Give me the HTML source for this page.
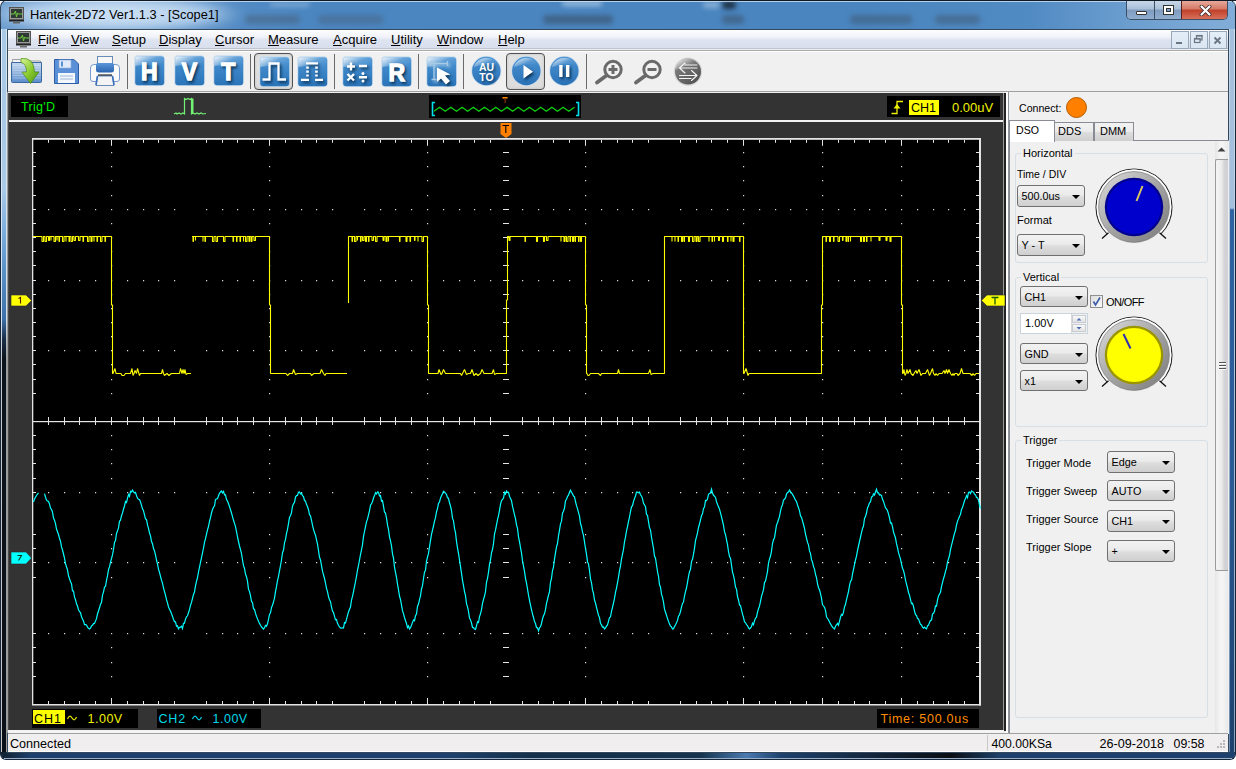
<!DOCTYPE html><html><head><meta charset="utf-8"><style>
*{margin:0;padding:0;box-sizing:border-box}
html,body{width:1236px;height:769px;overflow:hidden;background:#fff;font-family:"Liberation Sans",sans-serif;}
.a{position:absolute}
.t{position:absolute;white-space:nowrap;line-height:1}
.combo{position:absolute;border:1px solid #707070;border-radius:3px;background:linear-gradient(#f2f2f2,#ebebeb 45%,#dddddd 55%,#cfcfcf);font-size:11px;color:#000}
.combo span{position:absolute;left:3.5px;top:5px;line-height:1;font-size:10.8px}
.combo i{position:absolute;right:4px;top:8.6px;width:0;height:0;border-left:4px solid transparent;border-right:4px solid transparent;border-top:4px solid #000}
.gb{position:absolute;border:1px solid #d5dfe5;border-radius:3px}
.gbl{position:absolute;background:#f0f0f0;padding:0 2px;font-size:11px;line-height:1;color:#000}
.menu{position:absolute;top:33.4px;font-size:13px;line-height:1;color:#000;white-space:nowrap}
.menu u{text-decoration:underline;text-underline-offset:0.6px;text-decoration-thickness:1px}
.sep{position:absolute;top:54px;width:1px;height:35px;background:#6a6a6a}
</style></head><body>
<div class="a" style="left:0;top:0;width:1236px;height:760px;background:#16263a;border-radius:7px 7px 6px 6px"></div><div class="a" style="left:1px;top:1px;width:1234px;height:758px;background:linear-gradient(90deg,#6a9bcd 0,#4b86c1 25%,#4a85bf 70%,#5a92c8 100%);border-radius:6px 6px 5px 5px;overflow:hidden"></div><div class="a" style="left:1px;top:29px;width:6px;height:724px;background:linear-gradient(#a9c9e7 0,#a9c9e7 160px,#7fb0de 200px,#5a92c8 240px,#3d70a8 290px,#1a2f48 310px,#0b131c 330px,#0a1018 724px)"></div><div class="a" style="left:1px;top:29px;width:1px;height:724px;background:linear-gradient(#e2eef8 0,#d8e6f2 290px,#c8c8c8 330px,#c8c8c8 724px)"></div><div class="a" style="left:6px;top:29px;width:1px;height:724px;background:linear-gradient(#d8e6f0 0,#d0e0ee 290px,#a0a0a0 330px,#a0a0a0 724px)"></div><div class="a" style="left:1229px;top:29px;width:6px;height:724px;background:linear-gradient(#a4c0dc 0,#a4c0dc 179px,#2f62a0 181px,#2a5a94 450px,#1d416c 724px)"></div><div class="a" style="left:1229px;top:29px;width:1px;height:724px;background:linear-gradient(#c8daea,#6a8cb0)"></div><div class="a" style="left:1234px;top:29px;width:1px;height:724px;background:linear-gradient(#d0e0ee,#8aa4c0)"></div><div class="a" style="left:1px;top:752px;width:1234px;height:7px;border-radius:0 0 5px 5px;background:linear-gradient(90deg,#10202e 0,#1d416c 30px,#1d416c 450px,#14304a 530px,#16344e 700px,#4a7ab0 745px,#1d416c 780px,#0a0e12 950px,#1d416c 1000px,#1d416c 1234px)"></div><div class="a" style="left:4px;top:758px;width:1228px;height:1px;background:#9ab0c8"></div><div class="a" style="left:245px;top:15px;width:55px;height:9px;background:rgba(70,90,110,.45);filter:blur(2.5px);border-radius:4px;"></div><div class="a" style="left:318px;top:15px;width:65px;height:9px;background:rgba(70,90,110,.4);filter:blur(2.5px);border-radius:4px;"></div><div class="a" style="left:543px;top:15px;width:70px;height:9px;background:rgba(55,75,95,.55);filter:blur(2.5px);border-radius:4px;"></div><div class="a" style="left:722px;top:1px;width:14px;height:8px;background:rgba(20,30,40,.8);filter:blur(2.5px);border-radius:4px;"></div><div class="a" style="left:703px;top:2px;width:17px;height:6px;background:rgba(200,220,240,.5);filter:blur(2.5px);border-radius:4px;"></div><div class="a" style="left:722px;top:15px;width:22px;height:9px;background:rgba(55,75,95,.5);filter:blur(2.5px);border-radius:4px;"></div><div class="a" style="left:850px;top:15px;width:62px;height:9px;background:rgba(60,80,100,.45);filter:blur(2.5px);border-radius:4px;"></div><div class="a" style="left:935px;top:15px;width:45px;height:9px;background:rgba(60,80,100,.45);filter:blur(2.5px);border-radius:4px;"></div><div class="a" style="left:562px;top:1px;width:40px;height:5px;background:rgba(220,235,250,.55);filter:blur(2.5px);border-radius:4px;"></div><div class="a" style="left:270px;top:2px;width:40px;height:5px;background:rgba(200,225,245,.35);filter:blur(2.5px);border-radius:4px;"></div><div class="a" style="left:1030px;top:2px;width:205px;height:27px;background:linear-gradient(90deg,rgba(160,195,230,0),rgba(160,195,230,.3) 50%,rgba(170,200,232,.5));"></div><div class="a" style="left:-10px;top:-6px;width:260px;height:40px;filter:blur(6px);background:radial-gradient(ellipse 130px 20px at 125px 20px,rgba(215,232,248,.95) 0,rgba(200,222,244,.85) 70%,rgba(180,210,240,0) 100%)"></div><div class="a" style="left:0;top:0;width:1236px;height:1px;background:#0e1a26"></div><div class="a" style="left:4px;top:1px;width:1228px;height:1px;background:rgba(230,240,250,.7)"></div><div class="t" style="left:30px;top:8.5px;font-size:12.8px;color:#000">Hantek-2D72 Ver1.1.3 - [Scope1]</div><svg class="a" style="left:9px;top:7px" width="15" height="17" viewBox="0 0 15 17">
<rect x="0.5" y="0.5" width="14" height="12" fill="#9a9a9a" stroke="#555" stroke-width="1"/>
<rect x="2" y="2" width="11" height="9" fill="#2f3a36"/>
<polyline points="2,7 5,7 6.5,4 7.5,10 8.5,6 9.5,7 13,7" fill="none" stroke="#6fcf3a" stroke-width="1"/>
<rect x="0" y="13" width="15" height="1.5" fill="#222"/>
<rect x="4" y="15" width="7" height="1.5" fill="#666"/>
</svg><div class="a" style="left:1126px;top:1px;width:102px;height:19px;border:1px solid #3b4f66;border-top:none;border-radius:0 0 5px 5px;overflow:hidden">
<div class="a" style="left:0;top:0;width:27px;height:18px;background:linear-gradient(#c8d7e8,#a9bfd8 45%,#7f9cc0 50%,#90aed0)"></div>
<div class="a" style="left:27px;top:0;width:1px;height:18px;background:#3b4f66"></div>
<div class="a" style="left:28px;top:0;width:26px;height:18px;background:linear-gradient(#c8d7e8,#a9bfd8 45%,#7f9cc0 50%,#90aed0)"></div>
<div class="a" style="left:54px;top:0;width:1px;height:18px;background:#5a2020"></div>
<div class="a" style="left:55px;top:0;width:47px;height:18px;background:linear-gradient(#e8a89a,#d47a66 45%,#c0402a 50%,#d8705a)"></div>
<div class="a" style="left:9px;top:10px;width:11px;height:4px;background:#fff;border:1px solid #333;border-radius:1px"></div>
<div class="a" style="left:36px;top:4px;width:11px;height:10px;border:1px solid #333;background:#fff"><div class="a" style="left:2px;top:2px;width:5px;height:4px;background:#7da0c8;border:1px solid #333"></div></div>
<svg class="a" style="left:72px;top:4px" width="13" height="11" viewBox="0 0 13 11"><path d="M2.5 1.5 L10.5 9.5 M10.5 1.5 L2.5 9.5" stroke="#3a2a2a" stroke-width="3.8" stroke-linecap="round"/><path d="M2.5 1.5 L10.5 9.5 M10.5 1.5 L2.5 9.5" stroke="#fff" stroke-width="2.2" stroke-linecap="round"/></svg>
</div><div class="a" style="left:7px;top:29px;width:1222px;height:724px;background:#34485e"></div><div class="a" style="left:8px;top:30px;width:1220px;height:722px;background:#f0f0f0"></div><div class="a" style="left:8px;top:30px;width:1220px;height:18px;background:linear-gradient(#fdfdfe,#f0f2f8 40%,#dfe4f1 55%,#d8deec)"></div><div class="a" style="left:8px;top:48px;width:1220px;height:1px;background:#bcc4d2"></div><div class="a" style="left:8px;top:49px;width:1220px;height:1px;background:#eceef2"></div><div class="a" style="left:8px;top:50px;width:1220px;height:1px;background:#a9a9a9"></div><div class="a" style="left:8px;top:51px;width:1220px;height:1px;background:#ffffff"></div><svg class="a" style="left:16px;top:31px" width="15" height="17" viewBox="0 0 15 17">
<rect x="0.5" y="0.5" width="14" height="12" fill="#9a9a9a" stroke="#555" stroke-width="1"/>
<rect x="2" y="2" width="11" height="9" fill="#2f3a36"/>
<polyline points="2,7 5,7 6.5,4 7.5,10 8.5,6 9.5,7 13,7" fill="none" stroke="#6fcf3a" stroke-width="1"/>
<rect x="0" y="13" width="15" height="1.5" fill="#222"/>
<rect x="4" y="15" width="7" height="1.5" fill="#666"/>
</svg><div class="menu" style="left:38px"><u>F</u>ile</div><div class="menu" style="left:71px"><u>V</u>iew</div><div class="menu" style="left:112px"><u>S</u>etup</div><div class="menu" style="left:159px"><u>D</u>isplay</div><div class="menu" style="left:215px"><u>C</u>ursor</div><div class="menu" style="left:268px"><u>M</u>easure</div><div class="menu" style="left:333px"><u>A</u>cquire</div><div class="menu" style="left:391px"><u>U</u>tility</div><div class="menu" style="left:437px"><u>W</u>indow</div><div class="menu" style="left:498px"><u>H</u>elp</div><div class="a" style="left:1171px;top:31px;width:18px;height:18px;border:1px solid #98a8b8;background:linear-gradient(#e4eef8,#dae6f2)"></div><div class="a" style="left:1190px;top:31px;width:18px;height:18px;border:1px solid #98a8b8;background:linear-gradient(#e4eef8,#dae6f2)"></div><div class="a" style="left:1209px;top:31px;width:18px;height:18px;border:1px solid #98a8b8;background:linear-gradient(#e4eef8,#dae6f2)"></div><div class="a" style="left:1176px;top:42px;width:6px;height:2px;background:#6a7684"></div><svg class="a" style="left:1193px;top:34px" width="12" height="12"><rect x="3.5" y="1.5" width="5.5" height="4.5" fill="none" stroke="#6a7684" stroke-width="1.2"/><rect x="1.5" y="4.5" width="5.5" height="4" fill="#dde9f6" stroke="#6a7684" stroke-width="1.2"/><rect x="1" y="4" width="6.5" height="1.6" fill="#6a7684"/><rect x="3" y="1" width="6.5" height="1.6" fill="#6a7684"/></svg><svg class="a" style="left:1212px;top:35px" width="12" height="12"><path d="M2.5 2.5 L8.5 8.5 M8.5 2.5 L2.5 8.5" stroke="#6a7684" stroke-width="1.9"/></svg><div class="a" style="left:8px;top:52px;width:1220px;height:39px;background:#f0f0f0"></div><div class="a" style="left:8px;top:91px;width:1220px;height:1px;background:#a0a0a0"></div><svg class="a" style="left:10px;top:57px" width="34" height="30" viewBox="0 0 34 30">
<defs><linearGradient id="fo" x1="0" y1="0" x2="0" y2="1"><stop offset="0" stop-color="#c4d8ee"/><stop offset="1" stop-color="#5a8ccc"/></linearGradient>
<linearGradient id="ar" x1="0" y1="0" x2="1" y2="1"><stop offset="0" stop-color="#d8f59a"/><stop offset=".5" stop-color="#8ccc30"/><stop offset="1" stop-color="#4a9010"/></linearGradient></defs>
<path d="M2.5 2.5 L10 2.5 L11.5 4 L30.5 4 L30.5 8 L2.5 8Z" fill="#f4f4f4" stroke="#8a8a8a" stroke-width=".8"/>
<path d="M1.5 5.5 L31.5 5.5 L31.5 24.5 Q31.5 25.5 30.5 25.5 L2.5 25.5 Q1.5 25.5 1.5 24.5Z" fill="url(#fo)" stroke="#3a6aa0"/>
<path d="M3 8.5h28M3 11h28M3 13.5h28M3 16h28M3 18.5h28M3 21h28" stroke="#ffffff" stroke-opacity=".35" stroke-width=".8"/>
<path d="M11 1.5 Q24 0 24.5 15 L29 15 L20.5 26.5 L12 15 L16.5 15 Q16.5 6.5 11 5.5Z" fill="url(#ar)" stroke="#4a8a18" stroke-width=".7"/>
</svg><svg class="a" style="left:53px;top:58px" width="27" height="27" viewBox="0 0 27 27">
<path d="M1.5 1.5 L21 1.5 L25.5 6 L25.5 25.5 L1.5 25.5Z" fill="#5b8fd6" stroke="#2e5ea8"/>
<rect x="6" y="2" width="12" height="8" fill="#dfe9f7" stroke="#8fb0dc" stroke-width=".6"/>
<rect x="8" y="3.5" width="2" height="5" fill="#5b8fd6"/>
<rect x="5" y="15" width="17" height="10" fill="#f4f7fb"/>
<path d="M7 18h13M7 21h13" stroke="#9fb8d8"/>
</svg><svg class="a" style="left:89px;top:55px" width="32" height="32" viewBox="0 0 32 32">
<defs><linearGradient id="plid" x1="0" y1="0" x2="0" y2="1"><stop offset="0" stop-color="#5a96d8"/><stop offset="1" stop-color="#2a64b0"/></linearGradient></defs>
<rect x="8.5" y="1.5" width="15" height="10" fill="#f6f6f6" stroke="#6a8ab8"/>
<path d="M1.5 13 Q1.5 9.5 5 9.5 L27 9.5 Q30.5 9.5 30.5 13 L30.5 24 Q30.5 26.5 28 26.5 L4 26.5 Q1.5 26.5 1.5 24Z" fill="#fafafa" stroke="#7a9ccc"/>
<path d="M7 10 Q7 8 9 8 L23 8 Q25 8 25 10 L25 15 Q25 17.5 22 17.5 L10 17.5 Q7 17.5 7 15Z" fill="url(#plid)"/>
<path d="M9 20.5 L23 20.5" stroke="#2a2a2a" stroke-width="2.2"/>
<path d="M8.5 21 L23.5 21 L25 30.5 L7 30.5Z" fill="#f4f4f4" stroke="#6a8ab8"/>
<path d="M8.5 21 L7 30 M23.5 21 L25 30" stroke="#3a70c0" stroke-width="1.6"/>
</svg><div class="sep" style="left:127px"></div><svg class="a" style="left:134px;top:55px" width="31" height="31" viewBox="0 0 31 31">
<defs><linearGradient id="sb1" x1="0" y1="0" x2="0" y2="1"><stop offset="0" stop-color="#4b94d4"/><stop offset="1" stop-color="#2a74b8"/></linearGradient>
<linearGradient id="sg1" x1="0" y1="0" x2="1" y2=".7"><stop offset="0" stop-color="#ffffff" stop-opacity=".95"/><stop offset=".55" stop-color="#ffffff" stop-opacity=".15"/><stop offset="1" stop-color="#ffffff" stop-opacity="0"/></linearGradient>
<filter id="sf1" x="-20%" y="-20%" width="140%" height="140%"><feGaussianBlur stdDeviation="1.6"/></filter></defs>
<rect x=".3" y=".3" width="30.4" height="30.4" rx="3.5" fill="#c8dcee"/>
<rect x="1.2" y="1.2" width="29" height="29" rx="3" fill="url(#sb1)"/>
<path d="M1.2 4 Q1.2 1.2 4 1.2 L27.5 1.2 Q30.2 1.2 30.2 4 L30.2 13 Q18 8.5 1.2 11Z" fill="url(#sg1)"/>
<g transform="translate(1.6,2)" filter="url(#sf1)" opacity=".85"><text x="15.3" y="24.8" text-anchor="middle" font-size="23" fill="#062240" stroke="#062240" stroke-width="1.3" style="font-family:Liberation Sans;font-weight:bold">H</text></g>
<text x="15.3" y="24.8" text-anchor="middle" font-size="23" fill="#fff" stroke="#fff" stroke-width="1.3" style="font-family:Liberation Sans;font-weight:bold">H</text>
</svg><svg class="a" style="left:174px;top:55px" width="31" height="31" viewBox="0 0 31 31">
<defs><linearGradient id="sb2" x1="0" y1="0" x2="0" y2="1"><stop offset="0" stop-color="#4b94d4"/><stop offset="1" stop-color="#2a74b8"/></linearGradient>
<linearGradient id="sg2" x1="0" y1="0" x2="1" y2=".7"><stop offset="0" stop-color="#ffffff" stop-opacity=".95"/><stop offset=".55" stop-color="#ffffff" stop-opacity=".15"/><stop offset="1" stop-color="#ffffff" stop-opacity="0"/></linearGradient>
<filter id="sf2" x="-20%" y="-20%" width="140%" height="140%"><feGaussianBlur stdDeviation="1.6"/></filter></defs>
<rect x=".3" y=".3" width="30.4" height="30.4" rx="3.5" fill="#c8dcee"/>
<rect x="1.2" y="1.2" width="29" height="29" rx="3" fill="url(#sb2)"/>
<path d="M1.2 4 Q1.2 1.2 4 1.2 L27.5 1.2 Q30.2 1.2 30.2 4 L30.2 13 Q18 8.5 1.2 11Z" fill="url(#sg2)"/>
<g transform="translate(1.6,2)" filter="url(#sf2)" opacity=".85"><text x="15.3" y="24.8" text-anchor="middle" font-size="23" fill="#062240" stroke="#062240" stroke-width="1.3" style="font-family:Liberation Sans;font-weight:bold">V</text></g>
<text x="15.3" y="24.8" text-anchor="middle" font-size="23" fill="#fff" stroke="#fff" stroke-width="1.3" style="font-family:Liberation Sans;font-weight:bold">V</text>
</svg><svg class="a" style="left:213px;top:55px" width="31" height="31" viewBox="0 0 31 31">
<defs><linearGradient id="sb3" x1="0" y1="0" x2="0" y2="1"><stop offset="0" stop-color="#4b94d4"/><stop offset="1" stop-color="#2a74b8"/></linearGradient>
<linearGradient id="sg3" x1="0" y1="0" x2="1" y2=".7"><stop offset="0" stop-color="#ffffff" stop-opacity=".95"/><stop offset=".55" stop-color="#ffffff" stop-opacity=".15"/><stop offset="1" stop-color="#ffffff" stop-opacity="0"/></linearGradient>
<filter id="sf3" x="-20%" y="-20%" width="140%" height="140%"><feGaussianBlur stdDeviation="1.6"/></filter></defs>
<rect x=".3" y=".3" width="30.4" height="30.4" rx="3.5" fill="#c8dcee"/>
<rect x="1.2" y="1.2" width="29" height="29" rx="3" fill="url(#sb3)"/>
<path d="M1.2 4 Q1.2 1.2 4 1.2 L27.5 1.2 Q30.2 1.2 30.2 4 L30.2 13 Q18 8.5 1.2 11Z" fill="url(#sg3)"/>
<g transform="translate(1.6,2)" filter="url(#sf3)" opacity=".85"><text x="15.3" y="24.8" text-anchor="middle" font-size="23" fill="#062240" stroke="#062240" stroke-width="1.3" style="font-family:Liberation Sans;font-weight:bold">T</text></g>
<text x="15.3" y="24.8" text-anchor="middle" font-size="23" fill="#fff" stroke="#fff" stroke-width="1.3" style="font-family:Liberation Sans;font-weight:bold">T</text>
</svg><div class="sep" style="left:250px"></div><div class="a" style="left:254px;top:53px;width:39px;height:37px;border:1.5px solid #505050;border-radius:4px;background:linear-gradient(#e2e2e2,#dcdcdc);box-shadow:inset 0 0 3px #c0c0c0"></div><svg class="a" style="left:259px;top:56px" width="31" height="31" viewBox="0 0 31 31">
<defs><linearGradient id="sb4" x1="0" y1="0" x2="0" y2="1"><stop offset="0" stop-color="#4b94d4"/><stop offset="1" stop-color="#2a74b8"/></linearGradient>
<linearGradient id="sg4" x1="0" y1="0" x2="1" y2=".7"><stop offset="0" stop-color="#ffffff" stop-opacity=".95"/><stop offset=".55" stop-color="#ffffff" stop-opacity=".15"/><stop offset="1" stop-color="#ffffff" stop-opacity="0"/></linearGradient>
<filter id="sf4" x="-20%" y="-20%" width="140%" height="140%"><feGaussianBlur stdDeviation="1.6"/></filter></defs>
<rect x=".3" y=".3" width="30.4" height="30.4" rx="3.5" fill="#c8dcee"/>
<rect x="1.2" y="1.2" width="29" height="29" rx="3" fill="url(#sb4)"/>
<path d="M1.2 4 Q1.2 1.2 4 1.2 L27.5 1.2 Q30.2 1.2 30.2 4 L30.2 13 Q18 8.5 1.2 11Z" fill="url(#sg4)"/>
<g transform="translate(1.6,2)" filter="url(#sf4)" opacity=".85"><path d="M3.5 23.5 L10.5 23.5 L10.5 7.5 L19.5 7.5 L19.5 23.5 L27 23.5" fill="none" stroke="#062240" stroke-width="2.3"/></g>
<path d="M3.5 23.5 L10.5 23.5 L10.5 7.5 L19.5 7.5 L19.5 23.5 L27 23.5" fill="none" stroke="#fff" stroke-width="2.3"/>
</svg><svg class="a" style="left:297px;top:56px" width="31" height="31" viewBox="0 0 31 31">
<defs><linearGradient id="sb5" x1="0" y1="0" x2="0" y2="1"><stop offset="0" stop-color="#4b94d4"/><stop offset="1" stop-color="#2a74b8"/></linearGradient>
<linearGradient id="sg5" x1="0" y1="0" x2="1" y2=".7"><stop offset="0" stop-color="#ffffff" stop-opacity=".95"/><stop offset=".55" stop-color="#ffffff" stop-opacity=".15"/><stop offset="1" stop-color="#ffffff" stop-opacity="0"/></linearGradient>
<filter id="sf5" x="-20%" y="-20%" width="140%" height="140%"><feGaussianBlur stdDeviation="1.6"/></filter></defs>
<rect x=".3" y=".3" width="30.4" height="30.4" rx="3.5" fill="#c8dcee"/>
<rect x="1.2" y="1.2" width="29" height="29" rx="3" fill="url(#sb5)"/>
<path d="M1.2 4 Q1.2 1.2 4 1.2 L27.5 1.2 Q30.2 1.2 30.2 4 L30.2 13 Q18 8.5 1.2 11Z" fill="url(#sg5)"/>
<g transform="translate(1.6,2)" filter="url(#sf5)" opacity=".85"><path d="M4 23.8h8M18 23.8h8M9 7.3h12" stroke="#062240" stroke-width="2.3" fill="none"/><path d="M10.5 10.5v10M19.5 10.5v10" stroke="#062240" stroke-width="2.6" stroke-dasharray="2.2 1.8" fill="none"/></g>
<path d="M4 23.8h8M18 23.8h8M9 7.3h12" stroke="#fff" stroke-width="2.3" fill="none"/><path d="M10.5 10.5v10M19.5 10.5v10" stroke="#fff" stroke-width="2.6" stroke-dasharray="2.2 1.8" fill="none"/>
</svg><div class="sep" style="left:334px"></div><svg class="a" style="left:342px;top:56px" width="31" height="31" viewBox="0 0 31 31">
<defs><linearGradient id="sb6" x1="0" y1="0" x2="0" y2="1"><stop offset="0" stop-color="#4b94d4"/><stop offset="1" stop-color="#2a74b8"/></linearGradient>
<linearGradient id="sg6" x1="0" y1="0" x2="1" y2=".7"><stop offset="0" stop-color="#ffffff" stop-opacity=".95"/><stop offset=".55" stop-color="#ffffff" stop-opacity=".15"/><stop offset="1" stop-color="#ffffff" stop-opacity="0"/></linearGradient>
<filter id="sf6" x="-20%" y="-20%" width="140%" height="140%"><feGaussianBlur stdDeviation="1.6"/></filter></defs>
<rect x=".3" y=".3" width="30.4" height="30.4" rx="3.5" fill="#c8dcee"/>
<rect x="1.2" y="1.2" width="29" height="29" rx="3" fill="url(#sb6)"/>
<path d="M1.2 4 Q1.2 1.2 4 1.2 L27.5 1.2 Q30.2 1.2 30.2 4 L30.2 13 Q18 8.5 1.2 11Z" fill="url(#sg6)"/>
<g transform="translate(1.6,2)" filter="url(#sf6)" opacity=".85"><path d="M5 10.5h8M9 6.5v8M17 10h8M5.5 18l6.5 6.5M12 18l-6.5 6.5M17 21.2h8" stroke="#062240" stroke-width="2.4" fill="none"/><circle cx="21" cy="17.5" r="1.5" fill="#062240"/><circle cx="21" cy="25" r="1.5" fill="#062240"/></g>
<path d="M5 10.5h8M9 6.5v8M17 10h8M5.5 18l6.5 6.5M12 18l-6.5 6.5M17 21.2h8" stroke="#fff" stroke-width="2.4" fill="none"/><circle cx="21" cy="17.5" r="1.5" fill="#fff"/><circle cx="21" cy="25" r="1.5" fill="#fff"/>
</svg><svg class="a" style="left:381px;top:56px" width="31" height="31" viewBox="0 0 31 31">
<defs><linearGradient id="sb7" x1="0" y1="0" x2="0" y2="1"><stop offset="0" stop-color="#4b94d4"/><stop offset="1" stop-color="#2a74b8"/></linearGradient>
<linearGradient id="sg7" x1="0" y1="0" x2="1" y2=".7"><stop offset="0" stop-color="#ffffff" stop-opacity=".95"/><stop offset=".55" stop-color="#ffffff" stop-opacity=".15"/><stop offset="1" stop-color="#ffffff" stop-opacity="0"/></linearGradient>
<filter id="sf7" x="-20%" y="-20%" width="140%" height="140%"><feGaussianBlur stdDeviation="1.6"/></filter></defs>
<rect x=".3" y=".3" width="30.4" height="30.4" rx="3.5" fill="#c8dcee"/>
<rect x="1.2" y="1.2" width="29" height="29" rx="3" fill="url(#sb7)"/>
<path d="M1.2 4 Q1.2 1.2 4 1.2 L27.5 1.2 Q30.2 1.2 30.2 4 L30.2 13 Q18 8.5 1.2 11Z" fill="url(#sg7)"/>
<g transform="translate(1.6,2)" filter="url(#sf7)" opacity=".85"><text x="15.8" y="24.5" text-anchor="middle" font-size="23" fill="#062240" stroke="#062240" stroke-width="1.3" style="font-family:Liberation Sans;font-weight:bold">R</text></g>
<text x="15.8" y="24.5" text-anchor="middle" font-size="23" fill="#fff" stroke="#fff" stroke-width="1.3" style="font-family:Liberation Sans;font-weight:bold">R</text>
</svg><div class="sep" style="left:418px"></div><svg class="a" style="left:426px;top:56px" width="31" height="31" viewBox="0 0 31 31">
<defs><linearGradient id="sb8" x1="0" y1="0" x2="0" y2="1"><stop offset="0" stop-color="#4b94d4"/><stop offset="1" stop-color="#2a74b8"/></linearGradient>
<linearGradient id="sg8" x1="0" y1="0" x2="1" y2=".7"><stop offset="0" stop-color="#ffffff" stop-opacity=".95"/><stop offset=".55" stop-color="#ffffff" stop-opacity=".15"/><stop offset="1" stop-color="#ffffff" stop-opacity="0"/></linearGradient>
<filter id="sf8" x="-20%" y="-20%" width="140%" height="140%"><feGaussianBlur stdDeviation="1.6"/></filter></defs>
<rect x=".3" y=".3" width="30.4" height="30.4" rx="3.5" fill="#c8dcee"/>
<rect x="1.2" y="1.2" width="29" height="29" rx="3" fill="url(#sb8)"/>
<path d="M1.2 4 Q1.2 1.2 4 1.2 L27.5 1.2 Q30.2 1.2 30.2 4 L30.2 13 Q18 8.5 1.2 11Z" fill="url(#sg8)"/>
<g transform="translate(1.6,2)" filter="url(#sf8)" opacity=".85"><path d="M5 7.5h16M4.5 5v5M21.5 5v5M8 5v19M5.5 23.5h5" stroke="#a8cce6" stroke-width="1.3" fill="none"/><path d="M11 11.5 L11 26 L15 22.5 L20 28.5 L24 25 L19 19.5 L24.5 18.5Z" fill="#062240"/></g>
<path d="M5 7.5h16M4.5 5v5M21.5 5v5M8 5v19M5.5 23.5h5" stroke="#a8cce6" stroke-width="1.3" fill="none"/><path d="M11 11.5 L11 26 L15 22.5 L20 28.5 L24 25 L19 19.5 L24.5 18.5Z" fill="#fff"/>
</svg><div class="sep" style="left:463px"></div><svg class="a" style="left:471px;top:56px" width="31" height="31" viewBox="0 0 31 31">
<defs><linearGradient id="cb9" x1="0" y1="0" x2="0" y2="1"><stop offset="0" stop-color="#4a92d2"/><stop offset="1" stop-color="#2a72b6"/></linearGradient>
<linearGradient id="cg9" x1="0" y1="0" x2="1" y2=".8"><stop offset="0" stop-color="#ffffff" stop-opacity=".95"/><stop offset=".6" stop-color="#ffffff" stop-opacity=".1"/><stop offset="1" stop-color="#ffffff" stop-opacity="0"/></linearGradient>
<filter id="cf9" x="-20%" y="-20%" width="140%" height="140%"><feGaussianBlur stdDeviation="1.5"/></filter></defs>
<circle cx="15.3" cy="15" r="15" fill="#c4d8ec"/>
<circle cx="15.3" cy="15" r="14.2" fill="url(#cb9)"/>
<path d="M3 10 Q7 2 15.3 1.7 Q24 2 27.5 9 Q16 6 3 11Z" fill="url(#cg9)"/>
<g transform="translate(1.5,2)" filter="url(#cf9)" opacity=".85"><text x="15.5" y="14.8" text-anchor="middle" font-size="10.5" fill="#062240" style="font-family:Liberation Sans;font-weight:bold">AU</text><text x="15.5" y="25" text-anchor="middle" font-size="10.5" fill="#062240" style="font-family:Liberation Sans;font-weight:bold">TO</text></g>
<text x="15.5" y="14.8" text-anchor="middle" font-size="10.5" fill="#fff" style="font-family:Liberation Sans;font-weight:bold">AU</text><text x="15.5" y="25" text-anchor="middle" font-size="10.5" fill="#fff" style="font-family:Liberation Sans;font-weight:bold">TO</text>
</svg><div class="a" style="left:506px;top:53px;width:39px;height:37px;border:1.5px solid #505050;border-radius:4px;background:linear-gradient(#e2e2e2,#dcdcdc);box-shadow:inset 0 0 3px #c0c0c0"></div><svg class="a" style="left:511px;top:56px" width="31" height="31" viewBox="0 0 31 31">
<defs><linearGradient id="cb10" x1="0" y1="0" x2="0" y2="1"><stop offset="0" stop-color="#4a92d2"/><stop offset="1" stop-color="#2a72b6"/></linearGradient>
<linearGradient id="cg10" x1="0" y1="0" x2="1" y2=".8"><stop offset="0" stop-color="#ffffff" stop-opacity=".95"/><stop offset=".6" stop-color="#ffffff" stop-opacity=".1"/><stop offset="1" stop-color="#ffffff" stop-opacity="0"/></linearGradient>
<filter id="cf10" x="-20%" y="-20%" width="140%" height="140%"><feGaussianBlur stdDeviation="1.5"/></filter></defs>
<circle cx="15.3" cy="15" r="15" fill="#c4d8ec"/>
<circle cx="15.3" cy="15" r="14.2" fill="url(#cb10)"/>
<path d="M3 10 Q7 2 15.3 1.7 Q24 2 27.5 9 Q16 6 3 11Z" fill="url(#cg10)"/>
<g transform="translate(1.5,2)" filter="url(#cf10)" opacity=".85"><path d="M12.5 9 L22 15.8 L12.5 22.5Z" fill="#062240"/></g>
<path d="M12.5 9 L22 15.8 L12.5 22.5Z" fill="#fff"/>
</svg><svg class="a" style="left:549px;top:56px" width="31" height="31" viewBox="0 0 31 31">
<defs><linearGradient id="cb11" x1="0" y1="0" x2="0" y2="1"><stop offset="0" stop-color="#4a92d2"/><stop offset="1" stop-color="#2a72b6"/></linearGradient>
<linearGradient id="cg11" x1="0" y1="0" x2="1" y2=".8"><stop offset="0" stop-color="#ffffff" stop-opacity=".95"/><stop offset=".6" stop-color="#ffffff" stop-opacity=".1"/><stop offset="1" stop-color="#ffffff" stop-opacity="0"/></linearGradient>
<filter id="cf11" x="-20%" y="-20%" width="140%" height="140%"><feGaussianBlur stdDeviation="1.5"/></filter></defs>
<circle cx="15.3" cy="15" r="15" fill="#c4d8ec"/>
<circle cx="15.3" cy="15" r="14.2" fill="url(#cb11)"/>
<path d="M3 10 Q7 2 15.3 1.7 Q24 2 27.5 9 Q16 6 3 11Z" fill="url(#cg11)"/>
<g transform="translate(1.5,2)" filter="url(#cf11)" opacity=".85"><rect x="10.2" y="9" width="3.4" height="12" fill="#062240"/><rect x="17" y="9" width="3.4" height="12" fill="#062240"/></g>
<rect x="10.2" y="9" width="3.4" height="12" fill="#fff"/><rect x="17" y="9" width="3.4" height="12" fill="#fff"/>
</svg><div class="sep" style="left:586px"></div><svg class="a" style="left:594px;top:57px" width="31" height="30" viewBox="0 0 31 30">
<circle cx="19" cy="12.5" r="8.2" fill="#f2f2f2" stroke="#6a6a6a" stroke-width="3"/><path d="M14.5 12.5h9M19 8v9" stroke="#6a6a6a" stroke-width="3" fill="none"/>
<path d="M12.5 18.5 L3 25.5" stroke="#6a6a6a" stroke-width="3.8" stroke-linecap="round"/></svg><svg class="a" style="left:633px;top:57px" width="31" height="30" viewBox="0 0 31 30">
<circle cx="19" cy="12.5" r="8.2" fill="#f2f2f2" stroke="#6a6a6a" stroke-width="3"/><path d="M14.5 12.5h9" stroke="#6a6a6a" stroke-width="3"/>
<path d="M12.5 18.5 L3 25.5" stroke="#6a6a6a" stroke-width="3.8" stroke-linecap="round"/></svg><svg class="a" style="left:673px;top:57px" width="31" height="30" viewBox="0 0 31 30">
<defs><linearGradient id="swb" x1="0" y1="0" x2="1" y2="1"><stop offset="0" stop-color="#8a8a8a"/><stop offset="1" stop-color="#4a4a4a"/></linearGradient>
<linearGradient id="swg" x1="0" y1="0" x2="1" y2=".8"><stop offset="0" stop-color="#ffffff" stop-opacity=".9"/><stop offset=".6" stop-color="#ffffff" stop-opacity=".1"/><stop offset="1" stop-color="#ffffff" stop-opacity="0"/></linearGradient></defs>
<circle cx="15" cy="14.6" r="14.2" fill="#d8d8d8"/>
<circle cx="15" cy="14.6" r="13" fill="url(#swb)"/>
<path d="M2.5 10 Q6 2 15 1.6 Q23 2 27 8 Q15 6 3 13Z" fill="url(#swg)"/>
<path d="M6.5 11 L12 6 M6.5 11 L12 16 M6.5 11 L24 11 M24 18.5 L18.5 13.5 M24 18.5 L18.5 23.5 M24 18.5 L6.5 18.5 M12 8 L24 8 M6.5 21.5 L18 21.5" fill="none" stroke="#f4f4f4" stroke-width="1.1" stroke-linecap="round"/>
</svg><svg class="a" style="left:0;top:0" width="1236" height="769" viewBox="0 0 1236 769"><rect x="8" y="93" width="995" height="637" fill="#333333"/><rect x="7" y="92" width="1" height="641" fill="#9a9a9a"/><rect x="8" y="93" width="1" height="637" fill="#4a4a4a"/><rect x="1003" y="93" width="1" height="637" fill="#9a9a9a"/><rect x="1004" y="93" width="2" height="638" fill="#222222"/><rect x="1006" y="92" width="2" height="641" fill="#ffffff"/><rect x="1008" y="92" width="1" height="641" fill="#8f949a"/><rect x="8" y="730" width="995" height="3" fill="#f4f4f4"/><rect x="11" y="96" width="57" height="21" fill="#000"/><text x="21" y="111" font-size="12.5" letter-spacing=".3" fill="#00f000" font-family="Liberation Sans">Trig'D</text><path d="M174 114 L176 113 L177 114 L179 113 L181 114 L183 113 L184.5 114 L184.5 98.5 L186 99.5 L188 98.5 L190 99.5 L191.5 98.5 L191.5 114 L193 113 L195 114 L197 113 L199 114 L201 113 L203 114 L206 113.5" fill="none" stroke="#72f272" stroke-width="1.2"/><rect x="192" y="98.5" width="1.5" height="15.5" fill="#72f272"/><rect x="429" y="95" width="152" height="23" fill="#000"/><path d="M435 102.5 L432.5 102.5 L432.5 115.5 L435 115.5 M576 102.5 L578.5 102.5 L578.5 115.5 L576 115.5" fill="none" stroke="#00e0f0" stroke-width="1.6"/><polyline points="434.0,111.2 439.6,107.2 445.2,111.2 450.8,107.2 456.5,111.2 462.1,107.2 467.7,111.2 473.3,107.2 478.9,111.2 484.5,107.2 490.2,111.2 495.8,107.2 501.4,111.2 507.0,107.2 512.6,111.2 518.2,107.2 523.8,111.2 529.5,107.2 535.1,111.2 540.7,107.2 546.3,111.2 551.9,107.2 557.5,111.2 563.1,107.2 568.8,111.2 574.4,107.2" fill="none" stroke="#10d010" stroke-width="1.3"/><rect x="502.5" y="97" width="5" height="1.6" fill="#ff8c00"/><rect x="504.5" y="98" width="1.2" height="5" fill="#8a2a00"/><rect x="887" y="96" width="113" height="21" fill="#000"/><path d="M891.5 113.5 L897 113.5 L897 101.5 L903 101.5" fill="none" stroke="#f0f000" stroke-width="1.3"/><path d="M893.5 108.5 L900.5 108.5 L897 104Z" fill="#f0f000"/><rect x="909" y="100" width="30" height="15" fill="#ffff00"/><text x="911" y="112" font-size="12.5" fill="#000" font-family="Liberation Sans">CH1</text><text x="952" y="112" font-size="13" fill="#f0f000" font-family="Liberation Sans">0.00uV</text><rect x="9" y="120" width="994" height="2" fill="#f2f2f2"/><path d="M500.5 123 L511.5 123 L511.5 134 L506 138 L500.5 134Z" fill="#ff8000"/><path d="M502.5 125.5 L509 125.5 M505.8 125.5 L505.8 133" stroke="#000" stroke-width="1.1"/><rect x="32" y="138" width="948" height="566" fill="#000"/><rect x="32" y="138" width="949" height="1.8" fill="#e4e4e4"/><rect x="32" y="704" width="949" height="1.5" fill="#e4e4e4"/><rect x="32" y="138" width="1.3" height="567" fill="#e4e4e4"/><rect x="979" y="138" width="2" height="567.5" fill="#e4e4e4"/><path d="M48.5 139.8 v3 M48.5 704 v-3 M48.5 417.0 v8 M64.5 139.8 v3 M64.5 704 v-3 M64.5 417.0 v8 M79.5 139.8 v3 M79.5 704 v-3 M79.5 417.0 v8 M95.5 139.8 v3 M95.5 704 v-3 M95.5 417.0 v8 M111.5 139.8 v6 M111.5 704 v-6 M111.5 417.0 v8 M127.5 139.8 v3 M127.5 704 v-3 M127.5 417.0 v8 M143.5 139.8 v3 M143.5 704 v-3 M143.5 417.0 v8 M158.5 139.8 v3 M158.5 704 v-3 M158.5 417.0 v8 M174.5 139.8 v3 M174.5 704 v-3 M174.5 417.0 v8 M206.5 139.8 v3 M206.5 704 v-3 M206.5 417.0 v8 M222.5 139.8 v3 M222.5 704 v-3 M222.5 417.0 v8 M237.5 139.8 v3 M237.5 704 v-3 M237.5 417.0 v8 M253.5 139.8 v3 M253.5 704 v-3 M253.5 417.0 v8 M269.5 139.8 v6 M269.5 704 v-6 M269.5 417.0 v8 M285.5 139.8 v3 M285.5 704 v-3 M285.5 417.0 v8 M301.5 139.8 v3 M301.5 704 v-3 M301.5 417.0 v8 M316.5 139.8 v3 M316.5 704 v-3 M316.5 417.0 v8 M332.5 139.8 v3 M332.5 704 v-3 M332.5 417.0 v8 M364.5 139.8 v3 M364.5 704 v-3 M364.5 417.0 v8 M380.5 139.8 v3 M380.5 704 v-3 M380.5 417.0 v8 M395.5 139.8 v3 M395.5 704 v-3 M395.5 417.0 v8 M411.5 139.8 v3 M411.5 704 v-3 M411.5 417.0 v8 M427.5 139.8 v6 M427.5 704 v-6 M427.5 417.0 v8 M443.5 139.8 v3 M443.5 704 v-3 M443.5 417.0 v8 M459.5 139.8 v3 M459.5 704 v-3 M459.5 417.0 v8 M474.5 139.8 v3 M474.5 704 v-3 M474.5 417.0 v8 M490.5 139.8 v3 M490.5 704 v-3 M490.5 417.0 v8 M522.5 139.8 v3 M522.5 704 v-3 M522.5 417.0 v8 M538.5 139.8 v3 M538.5 704 v-3 M538.5 417.0 v8 M553.5 139.8 v3 M553.5 704 v-3 M553.5 417.0 v8 M569.5 139.8 v3 M569.5 704 v-3 M569.5 417.0 v8 M585.5 139.8 v6 M585.5 704 v-6 M585.5 417.0 v8 M601.5 139.8 v3 M601.5 704 v-3 M601.5 417.0 v8 M617.5 139.8 v3 M617.5 704 v-3 M617.5 417.0 v8 M632.5 139.8 v3 M632.5 704 v-3 M632.5 417.0 v8 M648.5 139.8 v3 M648.5 704 v-3 M648.5 417.0 v8 M680.5 139.8 v3 M680.5 704 v-3 M680.5 417.0 v8 M696.5 139.8 v3 M696.5 704 v-3 M696.5 417.0 v8 M711.5 139.8 v3 M711.5 704 v-3 M711.5 417.0 v8 M727.5 139.8 v3 M727.5 704 v-3 M727.5 417.0 v8 M743.5 139.8 v6 M743.5 704 v-6 M743.5 417.0 v8 M759.5 139.8 v3 M759.5 704 v-3 M759.5 417.0 v8 M775.5 139.8 v3 M775.5 704 v-3 M775.5 417.0 v8 M790.5 139.8 v3 M790.5 704 v-3 M790.5 417.0 v8 M806.5 139.8 v3 M806.5 704 v-3 M806.5 417.0 v8 M822.5 139.8 v6 M822.5 704 v-6 M822.5 417.0 v8 M838.5 139.8 v3 M838.5 704 v-3 M838.5 417.0 v8 M854.5 139.8 v3 M854.5 704 v-3 M854.5 417.0 v8 M869.5 139.8 v3 M869.5 704 v-3 M869.5 417.0 v8 M885.5 139.8 v3 M885.5 704 v-3 M885.5 417.0 v8 M901.5 139.8 v6 M901.5 704 v-6 M901.5 417.0 v8 M917.5 139.8 v3 M917.5 704 v-3 M917.5 417.0 v8 M933.5 139.8 v3 M933.5 704 v-3 M933.5 417.0 v8 M948.5 139.8 v3 M948.5 704 v-3 M948.5 417.0 v8 M964.5 139.8 v3 M964.5 704 v-3 M964.5 417.0 v8 M33 152.5 h3 M979 152.5 h-3 M503.0 152.5 h6 M33 166.5 h3 M979 166.5 h-3 M503.0 166.5 h6 M33 180.5 h3 M979 180.5 h-3 M503.0 180.5 h6 M33 195.5 h3 M979 195.5 h-3 M503.0 195.5 h6 M33 209.5 h3 M979 209.5 h-3 M503.0 209.5 h6 M33 223.5 h3 M979 223.5 h-3 M503.0 223.5 h6 M33 237.5 h3 M979 237.5 h-3 M503.0 237.5 h6 M33 251.5 h3 M979 251.5 h-3 M503.0 251.5 h6 M33 265.5 h3 M979 265.5 h-3 M503.0 265.5 h6 M33 280.5 h3 M979 280.5 h-3 M503.0 280.5 h6 M33 294.5 h3 M979 294.5 h-3 M503.0 294.5 h6 M33 308.5 h3 M979 308.5 h-3 M503.0 308.5 h6 M33 322.5 h3 M979 322.5 h-3 M503.0 322.5 h6 M33 336.5 h3 M979 336.5 h-3 M503.0 336.5 h6 M33 350.5 h3 M979 350.5 h-3 M503.0 350.5 h6 M33 364.5 h3 M979 364.5 h-3 M503.0 364.5 h6 M33 379.5 h3 M979 379.5 h-3 M503.0 379.5 h6 M33 393.5 h3 M979 393.5 h-3 M503.0 393.5 h6 M33 435.5 h3 M979 435.5 h-3 M503.0 435.5 h6 M33 449.5 h3 M979 449.5 h-3 M503.0 449.5 h6 M33 463.5 h3 M979 463.5 h-3 M503.0 463.5 h6 M33 478.5 h3 M979 478.5 h-3 M503.0 478.5 h6 M33 492.5 h3 M979 492.5 h-3 M503.0 492.5 h6 M33 534.5 h3 M979 534.5 h-3 M503.0 534.5 h6 M33 548.5 h3 M979 548.5 h-3 M503.0 548.5 h6 M33 562.5 h3 M979 562.5 h-3 M503.0 562.5 h6 M33 577.5 h3 M979 577.5 h-3 M503.0 577.5 h6 M33 633.5 h3 M979 633.5 h-3 M503.0 633.5 h6 M33 647.5 h3 M979 647.5 h-3 M503.0 647.5 h6 M33 662.5 h3 M979 662.5 h-3 M503.0 662.5 h6 M33 676.5 h3 M979 676.5 h-3 M503.0 676.5 h6" stroke="#e4e4e4" stroke-width="1" fill="none"/><rect x="32" y="421" width="948" height="1.2" fill="#e4e4e4"/><path d="M48 209h1.2v1.2h-1.2zM64 209h1.2v1.2h-1.2zM79 209h1.2v1.2h-1.2zM95 209h1.2v1.2h-1.2zM111 209h1.2v1.2h-1.2zM127 209h1.2v1.2h-1.2zM143 209h1.2v1.2h-1.2zM158 209h1.2v1.2h-1.2zM174 209h1.2v1.2h-1.2zM206 209h1.2v1.2h-1.2zM222 209h1.2v1.2h-1.2zM237 209h1.2v1.2h-1.2zM253 209h1.2v1.2h-1.2zM269 209h1.2v1.2h-1.2zM285 209h1.2v1.2h-1.2zM301 209h1.2v1.2h-1.2zM316 209h1.2v1.2h-1.2zM332 209h1.2v1.2h-1.2zM364 209h1.2v1.2h-1.2zM380 209h1.2v1.2h-1.2zM395 209h1.2v1.2h-1.2zM411 209h1.2v1.2h-1.2zM427 209h1.2v1.2h-1.2zM443 209h1.2v1.2h-1.2zM459 209h1.2v1.2h-1.2zM474 209h1.2v1.2h-1.2zM490 209h1.2v1.2h-1.2zM522 209h1.2v1.2h-1.2zM538 209h1.2v1.2h-1.2zM553 209h1.2v1.2h-1.2zM569 209h1.2v1.2h-1.2zM585 209h1.2v1.2h-1.2zM601 209h1.2v1.2h-1.2zM617 209h1.2v1.2h-1.2zM632 209h1.2v1.2h-1.2zM648 209h1.2v1.2h-1.2zM680 209h1.2v1.2h-1.2zM696 209h1.2v1.2h-1.2zM711 209h1.2v1.2h-1.2zM727 209h1.2v1.2h-1.2zM743 209h1.2v1.2h-1.2zM759 209h1.2v1.2h-1.2zM775 209h1.2v1.2h-1.2zM790 209h1.2v1.2h-1.2zM806 209h1.2v1.2h-1.2zM822 209h1.2v1.2h-1.2zM838 209h1.2v1.2h-1.2zM854 209h1.2v1.2h-1.2zM869 209h1.2v1.2h-1.2zM885 209h1.2v1.2h-1.2zM901 209h1.2v1.2h-1.2zM917 209h1.2v1.2h-1.2zM933 209h1.2v1.2h-1.2zM948 209h1.2v1.2h-1.2zM964 209h1.2v1.2h-1.2zM48 280h1.2v1.2h-1.2zM64 280h1.2v1.2h-1.2zM79 280h1.2v1.2h-1.2zM95 280h1.2v1.2h-1.2zM111 280h1.2v1.2h-1.2zM127 280h1.2v1.2h-1.2zM143 280h1.2v1.2h-1.2zM158 280h1.2v1.2h-1.2zM174 280h1.2v1.2h-1.2zM206 280h1.2v1.2h-1.2zM222 280h1.2v1.2h-1.2zM237 280h1.2v1.2h-1.2zM253 280h1.2v1.2h-1.2zM269 280h1.2v1.2h-1.2zM285 280h1.2v1.2h-1.2zM301 280h1.2v1.2h-1.2zM316 280h1.2v1.2h-1.2zM332 280h1.2v1.2h-1.2zM364 280h1.2v1.2h-1.2zM380 280h1.2v1.2h-1.2zM395 280h1.2v1.2h-1.2zM411 280h1.2v1.2h-1.2zM427 280h1.2v1.2h-1.2zM443 280h1.2v1.2h-1.2zM459 280h1.2v1.2h-1.2zM474 280h1.2v1.2h-1.2zM490 280h1.2v1.2h-1.2zM522 280h1.2v1.2h-1.2zM538 280h1.2v1.2h-1.2zM553 280h1.2v1.2h-1.2zM569 280h1.2v1.2h-1.2zM585 280h1.2v1.2h-1.2zM601 280h1.2v1.2h-1.2zM617 280h1.2v1.2h-1.2zM632 280h1.2v1.2h-1.2zM648 280h1.2v1.2h-1.2zM680 280h1.2v1.2h-1.2zM696 280h1.2v1.2h-1.2zM711 280h1.2v1.2h-1.2zM727 280h1.2v1.2h-1.2zM743 280h1.2v1.2h-1.2zM759 280h1.2v1.2h-1.2zM775 280h1.2v1.2h-1.2zM790 280h1.2v1.2h-1.2zM806 280h1.2v1.2h-1.2zM822 280h1.2v1.2h-1.2zM838 280h1.2v1.2h-1.2zM854 280h1.2v1.2h-1.2zM869 280h1.2v1.2h-1.2zM885 280h1.2v1.2h-1.2zM901 280h1.2v1.2h-1.2zM917 280h1.2v1.2h-1.2zM933 280h1.2v1.2h-1.2zM948 280h1.2v1.2h-1.2zM964 280h1.2v1.2h-1.2zM48 350h1.2v1.2h-1.2zM64 350h1.2v1.2h-1.2zM79 350h1.2v1.2h-1.2zM95 350h1.2v1.2h-1.2zM111 350h1.2v1.2h-1.2zM127 350h1.2v1.2h-1.2zM143 350h1.2v1.2h-1.2zM158 350h1.2v1.2h-1.2zM174 350h1.2v1.2h-1.2zM206 350h1.2v1.2h-1.2zM222 350h1.2v1.2h-1.2zM237 350h1.2v1.2h-1.2zM253 350h1.2v1.2h-1.2zM269 350h1.2v1.2h-1.2zM285 350h1.2v1.2h-1.2zM301 350h1.2v1.2h-1.2zM316 350h1.2v1.2h-1.2zM332 350h1.2v1.2h-1.2zM364 350h1.2v1.2h-1.2zM380 350h1.2v1.2h-1.2zM395 350h1.2v1.2h-1.2zM411 350h1.2v1.2h-1.2zM427 350h1.2v1.2h-1.2zM443 350h1.2v1.2h-1.2zM459 350h1.2v1.2h-1.2zM474 350h1.2v1.2h-1.2zM490 350h1.2v1.2h-1.2zM522 350h1.2v1.2h-1.2zM538 350h1.2v1.2h-1.2zM553 350h1.2v1.2h-1.2zM569 350h1.2v1.2h-1.2zM585 350h1.2v1.2h-1.2zM601 350h1.2v1.2h-1.2zM617 350h1.2v1.2h-1.2zM632 350h1.2v1.2h-1.2zM648 350h1.2v1.2h-1.2zM680 350h1.2v1.2h-1.2zM696 350h1.2v1.2h-1.2zM711 350h1.2v1.2h-1.2zM727 350h1.2v1.2h-1.2zM743 350h1.2v1.2h-1.2zM759 350h1.2v1.2h-1.2zM775 350h1.2v1.2h-1.2zM790 350h1.2v1.2h-1.2zM806 350h1.2v1.2h-1.2zM822 350h1.2v1.2h-1.2zM838 350h1.2v1.2h-1.2zM854 350h1.2v1.2h-1.2zM869 350h1.2v1.2h-1.2zM885 350h1.2v1.2h-1.2zM901 350h1.2v1.2h-1.2zM917 350h1.2v1.2h-1.2zM933 350h1.2v1.2h-1.2zM948 350h1.2v1.2h-1.2zM964 350h1.2v1.2h-1.2zM48 492h1.2v1.2h-1.2zM64 492h1.2v1.2h-1.2zM79 492h1.2v1.2h-1.2zM95 492h1.2v1.2h-1.2zM111 492h1.2v1.2h-1.2zM127 492h1.2v1.2h-1.2zM143 492h1.2v1.2h-1.2zM158 492h1.2v1.2h-1.2zM174 492h1.2v1.2h-1.2zM206 492h1.2v1.2h-1.2zM222 492h1.2v1.2h-1.2zM237 492h1.2v1.2h-1.2zM253 492h1.2v1.2h-1.2zM269 492h1.2v1.2h-1.2zM285 492h1.2v1.2h-1.2zM301 492h1.2v1.2h-1.2zM316 492h1.2v1.2h-1.2zM332 492h1.2v1.2h-1.2zM364 492h1.2v1.2h-1.2zM380 492h1.2v1.2h-1.2zM395 492h1.2v1.2h-1.2zM411 492h1.2v1.2h-1.2zM427 492h1.2v1.2h-1.2zM443 492h1.2v1.2h-1.2zM459 492h1.2v1.2h-1.2zM474 492h1.2v1.2h-1.2zM490 492h1.2v1.2h-1.2zM522 492h1.2v1.2h-1.2zM538 492h1.2v1.2h-1.2zM553 492h1.2v1.2h-1.2zM569 492h1.2v1.2h-1.2zM585 492h1.2v1.2h-1.2zM601 492h1.2v1.2h-1.2zM617 492h1.2v1.2h-1.2zM632 492h1.2v1.2h-1.2zM648 492h1.2v1.2h-1.2zM680 492h1.2v1.2h-1.2zM696 492h1.2v1.2h-1.2zM711 492h1.2v1.2h-1.2zM727 492h1.2v1.2h-1.2zM743 492h1.2v1.2h-1.2zM759 492h1.2v1.2h-1.2zM775 492h1.2v1.2h-1.2zM790 492h1.2v1.2h-1.2zM806 492h1.2v1.2h-1.2zM822 492h1.2v1.2h-1.2zM838 492h1.2v1.2h-1.2zM854 492h1.2v1.2h-1.2zM869 492h1.2v1.2h-1.2zM885 492h1.2v1.2h-1.2zM901 492h1.2v1.2h-1.2zM917 492h1.2v1.2h-1.2zM933 492h1.2v1.2h-1.2zM948 492h1.2v1.2h-1.2zM964 492h1.2v1.2h-1.2zM48 562h1.2v1.2h-1.2zM64 562h1.2v1.2h-1.2zM79 562h1.2v1.2h-1.2zM95 562h1.2v1.2h-1.2zM111 562h1.2v1.2h-1.2zM127 562h1.2v1.2h-1.2zM143 562h1.2v1.2h-1.2zM158 562h1.2v1.2h-1.2zM174 562h1.2v1.2h-1.2zM206 562h1.2v1.2h-1.2zM222 562h1.2v1.2h-1.2zM237 562h1.2v1.2h-1.2zM253 562h1.2v1.2h-1.2zM269 562h1.2v1.2h-1.2zM285 562h1.2v1.2h-1.2zM301 562h1.2v1.2h-1.2zM316 562h1.2v1.2h-1.2zM332 562h1.2v1.2h-1.2zM364 562h1.2v1.2h-1.2zM380 562h1.2v1.2h-1.2zM395 562h1.2v1.2h-1.2zM411 562h1.2v1.2h-1.2zM427 562h1.2v1.2h-1.2zM443 562h1.2v1.2h-1.2zM459 562h1.2v1.2h-1.2zM474 562h1.2v1.2h-1.2zM490 562h1.2v1.2h-1.2zM522 562h1.2v1.2h-1.2zM538 562h1.2v1.2h-1.2zM553 562h1.2v1.2h-1.2zM569 562h1.2v1.2h-1.2zM585 562h1.2v1.2h-1.2zM601 562h1.2v1.2h-1.2zM617 562h1.2v1.2h-1.2zM632 562h1.2v1.2h-1.2zM648 562h1.2v1.2h-1.2zM680 562h1.2v1.2h-1.2zM696 562h1.2v1.2h-1.2zM711 562h1.2v1.2h-1.2zM727 562h1.2v1.2h-1.2zM743 562h1.2v1.2h-1.2zM759 562h1.2v1.2h-1.2zM775 562h1.2v1.2h-1.2zM790 562h1.2v1.2h-1.2zM806 562h1.2v1.2h-1.2zM822 562h1.2v1.2h-1.2zM838 562h1.2v1.2h-1.2zM854 562h1.2v1.2h-1.2zM869 562h1.2v1.2h-1.2zM885 562h1.2v1.2h-1.2zM901 562h1.2v1.2h-1.2zM917 562h1.2v1.2h-1.2zM933 562h1.2v1.2h-1.2zM948 562h1.2v1.2h-1.2zM964 562h1.2v1.2h-1.2zM48 633h1.2v1.2h-1.2zM64 633h1.2v1.2h-1.2zM79 633h1.2v1.2h-1.2zM95 633h1.2v1.2h-1.2zM111 633h1.2v1.2h-1.2zM127 633h1.2v1.2h-1.2zM143 633h1.2v1.2h-1.2zM158 633h1.2v1.2h-1.2zM174 633h1.2v1.2h-1.2zM206 633h1.2v1.2h-1.2zM222 633h1.2v1.2h-1.2zM237 633h1.2v1.2h-1.2zM253 633h1.2v1.2h-1.2zM269 633h1.2v1.2h-1.2zM285 633h1.2v1.2h-1.2zM301 633h1.2v1.2h-1.2zM316 633h1.2v1.2h-1.2zM332 633h1.2v1.2h-1.2zM364 633h1.2v1.2h-1.2zM380 633h1.2v1.2h-1.2zM395 633h1.2v1.2h-1.2zM411 633h1.2v1.2h-1.2zM427 633h1.2v1.2h-1.2zM443 633h1.2v1.2h-1.2zM459 633h1.2v1.2h-1.2zM474 633h1.2v1.2h-1.2zM490 633h1.2v1.2h-1.2zM522 633h1.2v1.2h-1.2zM538 633h1.2v1.2h-1.2zM553 633h1.2v1.2h-1.2zM569 633h1.2v1.2h-1.2zM585 633h1.2v1.2h-1.2zM601 633h1.2v1.2h-1.2zM617 633h1.2v1.2h-1.2zM632 633h1.2v1.2h-1.2zM648 633h1.2v1.2h-1.2zM680 633h1.2v1.2h-1.2zM696 633h1.2v1.2h-1.2zM711 633h1.2v1.2h-1.2zM727 633h1.2v1.2h-1.2zM743 633h1.2v1.2h-1.2zM759 633h1.2v1.2h-1.2zM775 633h1.2v1.2h-1.2zM790 633h1.2v1.2h-1.2zM806 633h1.2v1.2h-1.2zM822 633h1.2v1.2h-1.2zM838 633h1.2v1.2h-1.2zM854 633h1.2v1.2h-1.2zM869 633h1.2v1.2h-1.2zM885 633h1.2v1.2h-1.2zM901 633h1.2v1.2h-1.2zM917 633h1.2v1.2h-1.2zM933 633h1.2v1.2h-1.2zM948 633h1.2v1.2h-1.2zM964 633h1.2v1.2h-1.2zM111 152h1.2v1.2h-1.2zM111 166h1.2v1.2h-1.2zM111 180h1.2v1.2h-1.2zM111 195h1.2v1.2h-1.2zM111 223h1.2v1.2h-1.2zM111 237h1.2v1.2h-1.2zM111 251h1.2v1.2h-1.2zM111 265h1.2v1.2h-1.2zM111 294h1.2v1.2h-1.2zM111 308h1.2v1.2h-1.2zM111 322h1.2v1.2h-1.2zM111 336h1.2v1.2h-1.2zM111 364h1.2v1.2h-1.2zM111 379h1.2v1.2h-1.2zM111 393h1.2v1.2h-1.2zM111 435h1.2v1.2h-1.2zM111 449h1.2v1.2h-1.2zM111 463h1.2v1.2h-1.2zM111 478h1.2v1.2h-1.2zM111 534h1.2v1.2h-1.2zM111 548h1.2v1.2h-1.2zM111 577h1.2v1.2h-1.2zM111 647h1.2v1.2h-1.2zM111 662h1.2v1.2h-1.2zM111 676h1.2v1.2h-1.2zM269 152h1.2v1.2h-1.2zM269 166h1.2v1.2h-1.2zM269 180h1.2v1.2h-1.2zM269 195h1.2v1.2h-1.2zM269 223h1.2v1.2h-1.2zM269 237h1.2v1.2h-1.2zM269 251h1.2v1.2h-1.2zM269 265h1.2v1.2h-1.2zM269 294h1.2v1.2h-1.2zM269 308h1.2v1.2h-1.2zM269 322h1.2v1.2h-1.2zM269 336h1.2v1.2h-1.2zM269 364h1.2v1.2h-1.2zM269 379h1.2v1.2h-1.2zM269 393h1.2v1.2h-1.2zM269 435h1.2v1.2h-1.2zM269 449h1.2v1.2h-1.2zM269 463h1.2v1.2h-1.2zM269 478h1.2v1.2h-1.2zM269 534h1.2v1.2h-1.2zM269 548h1.2v1.2h-1.2zM269 577h1.2v1.2h-1.2zM269 647h1.2v1.2h-1.2zM269 662h1.2v1.2h-1.2zM269 676h1.2v1.2h-1.2zM427 152h1.2v1.2h-1.2zM427 166h1.2v1.2h-1.2zM427 180h1.2v1.2h-1.2zM427 195h1.2v1.2h-1.2zM427 223h1.2v1.2h-1.2zM427 237h1.2v1.2h-1.2zM427 251h1.2v1.2h-1.2zM427 265h1.2v1.2h-1.2zM427 294h1.2v1.2h-1.2zM427 308h1.2v1.2h-1.2zM427 322h1.2v1.2h-1.2zM427 336h1.2v1.2h-1.2zM427 364h1.2v1.2h-1.2zM427 379h1.2v1.2h-1.2zM427 393h1.2v1.2h-1.2zM427 435h1.2v1.2h-1.2zM427 449h1.2v1.2h-1.2zM427 463h1.2v1.2h-1.2zM427 478h1.2v1.2h-1.2zM427 534h1.2v1.2h-1.2zM427 548h1.2v1.2h-1.2zM427 577h1.2v1.2h-1.2zM427 647h1.2v1.2h-1.2zM427 662h1.2v1.2h-1.2zM427 676h1.2v1.2h-1.2zM585 152h1.2v1.2h-1.2zM585 166h1.2v1.2h-1.2zM585 180h1.2v1.2h-1.2zM585 195h1.2v1.2h-1.2zM585 223h1.2v1.2h-1.2zM585 237h1.2v1.2h-1.2zM585 251h1.2v1.2h-1.2zM585 265h1.2v1.2h-1.2zM585 294h1.2v1.2h-1.2zM585 308h1.2v1.2h-1.2zM585 322h1.2v1.2h-1.2zM585 336h1.2v1.2h-1.2zM585 364h1.2v1.2h-1.2zM585 379h1.2v1.2h-1.2zM585 393h1.2v1.2h-1.2zM585 435h1.2v1.2h-1.2zM585 449h1.2v1.2h-1.2zM585 463h1.2v1.2h-1.2zM585 478h1.2v1.2h-1.2zM585 534h1.2v1.2h-1.2zM585 548h1.2v1.2h-1.2zM585 577h1.2v1.2h-1.2zM585 647h1.2v1.2h-1.2zM585 662h1.2v1.2h-1.2zM585 676h1.2v1.2h-1.2zM743 152h1.2v1.2h-1.2zM743 166h1.2v1.2h-1.2zM743 180h1.2v1.2h-1.2zM743 195h1.2v1.2h-1.2zM743 223h1.2v1.2h-1.2zM743 237h1.2v1.2h-1.2zM743 251h1.2v1.2h-1.2zM743 265h1.2v1.2h-1.2zM743 294h1.2v1.2h-1.2zM743 308h1.2v1.2h-1.2zM743 322h1.2v1.2h-1.2zM743 336h1.2v1.2h-1.2zM743 364h1.2v1.2h-1.2zM743 379h1.2v1.2h-1.2zM743 393h1.2v1.2h-1.2zM743 435h1.2v1.2h-1.2zM743 449h1.2v1.2h-1.2zM743 463h1.2v1.2h-1.2zM743 478h1.2v1.2h-1.2zM743 534h1.2v1.2h-1.2zM743 548h1.2v1.2h-1.2zM743 577h1.2v1.2h-1.2zM743 647h1.2v1.2h-1.2zM743 662h1.2v1.2h-1.2zM743 676h1.2v1.2h-1.2zM822 152h1.2v1.2h-1.2zM822 166h1.2v1.2h-1.2zM822 180h1.2v1.2h-1.2zM822 195h1.2v1.2h-1.2zM822 223h1.2v1.2h-1.2zM822 237h1.2v1.2h-1.2zM822 251h1.2v1.2h-1.2zM822 265h1.2v1.2h-1.2zM822 294h1.2v1.2h-1.2zM822 308h1.2v1.2h-1.2zM822 322h1.2v1.2h-1.2zM822 336h1.2v1.2h-1.2zM822 364h1.2v1.2h-1.2zM822 379h1.2v1.2h-1.2zM822 393h1.2v1.2h-1.2zM822 435h1.2v1.2h-1.2zM822 449h1.2v1.2h-1.2zM822 463h1.2v1.2h-1.2zM822 478h1.2v1.2h-1.2zM822 534h1.2v1.2h-1.2zM822 548h1.2v1.2h-1.2zM822 577h1.2v1.2h-1.2zM822 647h1.2v1.2h-1.2zM822 662h1.2v1.2h-1.2zM822 676h1.2v1.2h-1.2zM901 152h1.2v1.2h-1.2zM901 166h1.2v1.2h-1.2zM901 180h1.2v1.2h-1.2zM901 195h1.2v1.2h-1.2zM901 223h1.2v1.2h-1.2zM901 237h1.2v1.2h-1.2zM901 251h1.2v1.2h-1.2zM901 265h1.2v1.2h-1.2zM901 294h1.2v1.2h-1.2zM901 308h1.2v1.2h-1.2zM901 322h1.2v1.2h-1.2zM901 336h1.2v1.2h-1.2zM901 364h1.2v1.2h-1.2zM901 379h1.2v1.2h-1.2zM901 393h1.2v1.2h-1.2zM901 435h1.2v1.2h-1.2zM901 449h1.2v1.2h-1.2zM901 463h1.2v1.2h-1.2zM901 478h1.2v1.2h-1.2zM901 534h1.2v1.2h-1.2zM901 548h1.2v1.2h-1.2zM901 577h1.2v1.2h-1.2zM901 647h1.2v1.2h-1.2zM901 662h1.2v1.2h-1.2zM901 676h1.2v1.2h-1.2z" fill="#dcdcdc"/><polyline points="33.0,236.5 42.0,236.5 42.0,236.5 42.0,241.5 43.5,241.5 43.5,236.5 45.0,236.5 45.0,241.5 46.5,241.5 46.5,236.5 48.5,236.5 48.5,240.5 49.5,240.5 49.5,236.5 51.0,236.5 51.0,240.5 51.0,240.5 51.0,236.5 54.0,236.5 54.0,241.5 55.5,241.5 55.5,236.5 57.0,236.5 57.0,240.5 57.0,240.5 57.0,236.5 59.0,236.5 59.0,241.5 59.5,241.5 59.5,236.5 62.5,236.5 62.5,241.5 64.0,241.5 64.0,236.5 66.0,236.5 66.0,241.5 66.0,241.5 66.0,236.5 69.0,236.5 69.0,241.5 69.5,241.5 69.5,236.5 71.0,236.5 71.0,241.5 72.5,241.5 72.5,236.5 74.0,236.5 74.0,240.5 75.5,240.5 75.5,236.5 78.5,236.5 78.5,240.5 80.0,240.5 80.0,236.5 83.0,236.5 83.0,241.5 83.5,241.5 83.5,236.5 87.5,236.5 87.5,241.5 89.0,241.5 89.0,236.5 91.0,236.5 91.0,241.5 92.0,241.5 92.0,236.5 94.0,236.5 94.0,241.5 94.0,241.5 94.0,236.5 97.0,236.5 97.0,241.5 97.5,241.5 97.5,236.5 100.5,236.5 100.5,241.5 102.0,241.5 102.0,236.5 105.0,236.5 105.0,241.5 105.5,241.5 105.5,236.5 111.0,236.5 111.5,236.5 111.5,305.0 112.5,305.0 112.5,373.5 113.0,373.5 115.0,368.5 116.0,373.5 121.0,373.5 122.0,375.5 124.0,375.5 125.5,373.5 130.5,373.5 132.0,368.5 133.0,375.5 134.0,373.5 135.0,370.5 136.5,373.5 137.5,368.5 139.5,375.5 140.5,373.5 145.5,373.5 150.5,373.5 158.5,373.5 161.5,373.5 162.5,369.5 163.5,373.5 164.5,375.5 165.5,374.5 167.0,373.5 169.0,375.5 170.0,374.5 171.5,373.5 179.5,373.5 180.5,368.5 182.0,373.5 183.0,369.5 184.0,373.5 185.0,369.5 186.0,374.5 187.5,373.5 189.5,373.5 191.0,373.5" fill="none" stroke="#ffff00" stroke-width="1.1" stroke-linejoin="bevel"/><polyline points="192.0,236.5 193.0,236.5 193.0,241.5 193.5,241.5 193.5,236.5 195.5,236.5 195.5,240.5 195.5,240.5 195.5,236.5 203.0,236.5 203.0,236.5 203.0,241.5 203.0,241.5 203.0,236.5 205.0,236.5 205.0,241.5 205.5,241.5 205.5,236.5 212.5,236.5 212.5,236.5 212.5,241.5 214.0,241.5 214.0,236.5 216.0,236.5 216.0,241.5 217.5,241.5 217.5,236.5 223.5,236.5 223.5,236.5 223.5,241.5 225.0,241.5 225.0,236.5 233.0,236.5 233.0,236.5 233.0,241.5 233.5,241.5 233.5,236.5 236.5,236.5 236.5,241.5 237.0,241.5 237.0,236.5 240.0,236.5 240.0,241.5 240.5,241.5 240.5,236.5 243.5,236.5 243.5,241.5 243.5,241.5 243.5,236.5 245.5,236.5 245.5,241.5 247.0,241.5 247.0,236.5 249.0,236.5 249.0,241.5 249.5,241.5 249.5,236.5 251.0,236.5 251.0,241.5 252.0,241.5 252.0,236.5 254.0,236.5 254.0,240.5 255.5,240.5 255.5,236.5 264.5,236.5 269.0,236.5 269.0,236.5 269.5,236.5 269.5,305.0 270.5,305.0 270.5,373.5 271.0,373.5 273.0,373.5 275.0,373.5 278.0,373.5 281.0,373.5 286.0,373.5 287.5,375.5 289.5,373.5 292.5,373.5 293.5,369.5 295.5,374.5 297.5,373.5 305.5,373.5 310.5,373.5 311.5,375.5 312.5,374.5 314.0,373.5 317.0,373.5 320.0,373.5 321.5,369.5 323.5,373.5 325.0,375.5 326.0,373.5 331.0,373.5 339.0,373.5 342.0,373.5 344.0,373.5 347.0,373.5" fill="none" stroke="#ffff00" stroke-width="1.1" stroke-linejoin="bevel"/><polyline points="348.5,303.0 348.5,236.5 349.0,236.5 352.0,236.5 352.0,241.5 352.5,241.5 352.5,236.5 354.5,236.5 354.5,241.5 356.0,241.5 356.0,236.5 357.5,236.5 357.5,240.5 357.5,240.5 357.5,236.5 360.5,236.5 360.5,241.5 361.0,241.5 361.0,236.5 362.5,236.5 362.5,240.5 364.0,240.5 364.0,236.5 365.5,236.5 365.5,241.5 366.5,241.5 366.5,236.5 368.5,236.5 368.5,241.5 369.0,241.5 369.0,236.5 372.0,236.5 372.0,240.5 373.5,240.5 373.5,236.5 375.5,236.5 375.5,241.5 377.0,241.5 377.0,236.5 383.0,236.5 383.0,236.5 383.0,240.5 384.0,240.5 384.0,236.5 386.0,236.5 386.0,241.5 387.0,241.5 387.0,236.5 388.5,236.5 388.5,241.5 388.5,241.5 388.5,236.5 399.5,236.5 399.5,236.5 399.5,241.5 400.0,241.5 400.0,236.5 406.0,236.5 406.0,236.5 406.0,241.5 407.0,241.5 407.0,236.5 410.0,236.5 410.0,241.5 410.5,241.5 410.5,236.5 414.5,236.5 414.5,240.5 415.0,240.5 415.0,236.5 418.0,236.5 418.0,241.5 418.0,241.5 418.0,236.5 422.0,236.5 422.0,241.5 423.5,241.5 423.5,236.5 427.0,236.5 427.5,236.5 427.5,305.0 428.5,305.0 428.5,373.5 429.0,373.5 431.0,373.5 436.0,373.5 438.0,373.5 439.0,369.5 441.0,374.5 442.0,373.5 443.5,369.5 445.5,373.5 450.5,373.5 458.5,373.5 460.5,373.5 461.5,375.5 462.5,373.5 464.5,369.5 466.5,374.5 468.5,373.5 470.5,373.5 472.0,369.5 474.0,375.5 476.0,373.5 478.0,375.5 479.0,374.5 480.5,373.5 482.0,369.5 484.0,373.5 489.0,373.5 492.0,373.5 493.5,369.5 494.5,374.5 496.5,373.5 504.5,373.5 506.0,373.5 506.5,373.5 506.5,300.0 507.5,300.0 507.5,236.5 508.0,236.5 509.0,236.5 509.0,240.5 510.0,240.5 510.0,236.5 519.0,236.5 525.0,236.5 525.0,236.5 525.0,241.5 525.5,241.5 525.5,236.5 536.5,236.5 536.5,236.5 536.5,241.5 537.5,241.5 537.5,236.5 543.5,236.5 543.5,236.5 543.5,241.5 544.5,241.5 544.5,236.5 546.5,236.5 546.5,240.5 548.0,240.5 548.0,236.5 561.0,236.5 561.0,236.5 561.0,241.5 561.0,241.5 561.0,236.5 564.0,236.5 564.0,241.5 565.0,241.5 565.0,236.5 566.5,236.5 566.5,241.5 568.0,241.5 568.0,236.5 570.0,236.5 570.0,241.5 570.5,241.5 570.5,236.5 572.5,236.5 572.5,241.5 573.5,241.5 573.5,236.5 575.0,236.5 575.0,241.5 575.5,241.5 575.5,236.5 578.5,236.5 578.5,241.5 579.0,241.5 579.0,236.5 580.5,236.5 580.5,241.5 581.5,241.5 581.5,236.5 585.0,236.5 585.5,236.5 585.5,305.0 586.5,305.0 586.5,373.5 587.0,373.5 588.0,375.5 589.0,375.5 590.5,373.5 598.5,373.5 600.5,375.5 601.5,373.5 609.5,373.5 612.5,373.5 614.5,373.5 617.5,373.5 618.5,369.5 619.5,373.5 627.5,373.5 629.5,373.5 632.5,373.5 634.5,373.5 636.5,373.5 638.5,373.5 640.5,373.5 648.5,373.5 650.0,369.5 651.0,374.5 653.0,373.5 661.0,373.5 664.0,373.5 664.5,373.5 664.5,236.5 665.0,236.5 672.0,236.5 672.0,236.5 672.0,241.5 672.0,241.5 672.0,236.5 675.0,236.5 675.0,241.5 675.0,241.5 675.0,236.5 678.0,236.5 678.0,241.5 678.5,241.5 678.5,236.5 681.5,236.5 681.5,241.5 682.5,241.5 682.5,236.5 684.0,236.5 684.0,241.5 684.5,241.5 684.5,236.5 688.5,236.5 688.5,241.5 689.5,241.5 689.5,236.5 692.5,236.5 692.5,241.5 694.0,241.5 694.0,236.5 696.0,236.5 696.0,241.5 697.0,241.5 697.0,236.5 698.5,236.5 698.5,241.5 700.0,241.5 700.0,236.5 709.0,236.5 709.0,236.5 709.0,241.5 709.0,241.5 709.0,236.5 712.0,236.5 712.0,241.5 712.5,241.5 712.5,236.5 714.5,236.5 714.5,241.5 714.5,241.5 714.5,236.5 718.5,236.5 718.5,240.5 719.5,240.5 719.5,236.5 722.5,236.5 722.5,241.5 723.5,241.5 723.5,236.5 727.5,236.5 727.5,241.5 728.0,241.5 728.0,236.5 731.0,236.5 731.0,241.5 731.0,241.5 731.0,236.5 733.0,236.5 733.0,241.5 734.0,241.5 734.0,236.5 739.5,236.5 739.5,236.5 739.5,241.5 740.0,241.5 740.0,236.5 743.0,236.5 743.5,236.5 743.5,373.5 744.0,373.5 746.0,368.5 748.0,375.5 749.0,373.5 751.0,373.5 756.0,373.5 759.0,373.5 764.0,373.5 769.0,373.5 774.0,373.5 782.0,373.5 790.0,373.5 793.0,373.5 795.0,373.5 803.0,373.5 806.0,373.5 811.0,373.5 814.0,373.5 821.0,373.5 821.0,373.5 821.5,373.5 821.5,305.0 822.5,305.0 822.5,236.5 823.0,236.5 826.0,236.5 826.0,241.5 826.5,241.5 826.5,236.5 829.5,236.5 829.5,241.5 830.5,241.5 830.5,236.5 833.5,236.5 833.5,241.5 834.0,241.5 834.0,236.5 838.0,236.5 838.0,241.5 839.5,241.5 839.5,236.5 842.5,236.5 842.5,240.5 843.0,240.5 843.0,236.5 846.0,236.5 846.0,241.5 846.5,241.5 846.5,236.5 848.0,236.5 848.0,241.5 848.5,241.5 848.5,236.5 850.5,236.5 850.5,241.5 850.5,241.5 850.5,236.5 860.5,236.5 860.5,236.5 860.5,241.5 861.5,241.5 861.5,236.5 863.5,236.5 863.5,241.5 864.5,241.5 864.5,236.5 866.5,236.5 866.5,241.5 867.0,241.5 867.0,236.5 871.0,236.5 871.0,241.5 871.0,241.5 871.0,236.5 879.0,236.5 879.0,236.5 879.0,240.5 880.0,240.5 880.0,236.5 886.0,236.5 886.0,236.5 886.0,240.5 887.0,240.5 887.0,236.5 890.0,236.5 890.0,241.5 891.0,241.5 891.0,236.5 900.0,236.5 901.0,236.5 901.5,236.5 901.5,305.0 902.5,305.0 902.5,373.5 903.0,373.5 904.0,369.5 905.0,375.5 906.0,373.5 907.0,369.5 908.0,373.5 910.0,369.5 911.0,373.5 913.0,375.5 914.0,373.5 916.0,370.5 917.0,373.5 919.0,369.5 921.0,375.5 922.5,373.5 925.5,373.5 927.5,369.5 929.5,375.5 930.5,373.5 932.5,368.5 933.5,373.5 935.0,375.5 936.0,373.5 937.5,375.5 939.0,373.5 942.0,373.5 944.0,370.5 945.0,373.5 946.5,369.5 947.5,373.5 949.0,369.5 950.5,373.5 952.0,375.5 953.0,373.5 954.0,375.5 955.0,373.5 957.0,373.5 958.0,375.5 960.0,373.5 961.5,368.5 963.0,373.5 965.0,373.5 970.0,373.5 972.0,375.5 973.0,373.5 974.5,375.5 976.0,373.5 979.0,373.5" fill="none" stroke="#ffff00" stroke-width="1.1" stroke-linejoin="bevel"/><polyline points="33.5,502.0 34.5,499.0 35.5,497.2 36.5,495.5 37.5,494.1 38.5,492.8" fill="none" stroke="#00ffff" stroke-width="1.2"/><polyline points="44.5,493.7 45.5,497.2 46.5,499.9 47.5,501.1 48.5,501.5 49.5,503.9 50.5,508.3 51.5,509.3 52.5,512.2 53.5,518.0 54.5,520.3 55.5,523.7 56.5,529.0 57.5,531.7 58.5,534.5 59.5,538.3 60.5,541.2 61.5,546.9 62.5,550.0 63.5,554.0 64.5,558.0 65.5,563.8 66.5,566.9 67.5,570.0 68.5,575.8 69.5,578.8 70.5,581.7 71.5,583.7 72.5,591.0 73.5,591.0 74.5,597.2 75.5,599.7 76.5,603.8 77.5,606.0 78.5,609.8 79.5,611.7 80.5,612.5 81.5,616.7 82.5,618.9 83.5,621.0 84.5,624.6 85.5,624.5 86.5,625.0 87.5,627.2 88.5,628.2 89.5,629.0 90.5,628.1 91.5,625.9 92.5,625.4 93.5,623.6 94.5,623.4 95.5,621.1 96.5,618.6 97.5,614.0 98.5,611.0 99.5,607.8 100.5,604.3 101.5,602.5 102.5,595.1 103.5,592.1 104.5,587.1 105.5,586.5 106.5,580.3 107.5,575.9 108.5,569.6 109.5,566.9 110.5,562.3 111.5,558.6 112.5,554.9 113.5,549.5 114.5,542.3 115.5,540.6 116.5,533.5 117.5,531.1 118.5,527.9 119.5,521.3 120.5,520.2 121.5,515.7 122.5,513.1 123.5,509.0 124.5,506.0 125.5,501.4 126.5,502.5 127.5,498.4 128.5,494.6 129.5,496.4 130.5,491.4 131.5,491.9 132.5,490.1 133.5,491.8 134.5,492.9 135.5,492.4 136.5,495.6 137.5,498.2 138.5,499.3 139.5,499.6 140.5,501.9 141.5,505.3 142.5,508.9 143.5,510.8 144.5,514.8 145.5,518.9 146.5,519.5 147.5,524.8 148.5,528.4 149.5,533.0 150.5,535.9 151.5,541.6 152.5,543.7 153.5,548.6 154.5,550.9 155.5,555.0 156.5,560.0 157.5,564.1 158.5,569.1 159.5,572.3 160.5,576.3 161.5,580.2 162.5,583.2 163.5,587.9 164.5,591.6 165.5,595.2 166.5,599.6 167.5,602.9 168.5,607.0 169.5,609.2 170.5,611.1 171.5,613.8 172.5,616.3 173.5,619.5 174.5,621.6 175.5,621.8 176.5,626.2 177.5,625.8 178.5,628.9 179.5,627.3 180.5,627.2 181.5,626.2 182.5,628.5 183.5,623.3 184.5,623.2 185.5,619.2 186.5,616.8 187.5,615.8 188.5,612.8 189.5,609.6 190.5,605.2 191.5,602.4 192.5,598.5 193.5,594.4 194.5,592.0 195.5,585.8 196.5,581.3 197.5,577.6 198.5,572.0 199.5,567.2 200.5,562.4 201.5,557.6 202.5,552.8 203.5,548.0 204.5,542.4 205.5,538.7 206.5,534.2 207.5,529.8 208.5,526.5 209.5,521.5 210.5,517.6 211.5,513.0 212.5,509.5 213.5,507.2 214.5,506.0 215.5,499.6 216.5,499.0 217.5,498.6 218.5,495.8 219.5,493.3 220.5,492.0 221.5,491.0 222.5,492.9 223.5,491.4 224.5,494.8 225.5,494.8 226.5,499.6 227.5,501.1 228.5,503.7 229.5,506.6 230.5,509.7 231.5,513.0 232.5,516.6 233.5,520.3 234.5,523.4 235.5,526.6 236.5,531.7 237.5,537.0 238.5,541.5 239.5,546.0 240.5,549.7 241.5,553.5 242.5,560.0 243.5,565.6 244.5,568.5 245.5,574.0 246.5,576.7 247.5,581.2 248.5,589.2 249.5,591.6 250.5,595.7 251.5,601.5 252.5,602.5 253.5,608.8 254.5,609.4 255.5,613.4 256.5,616.3 257.5,618.9 258.5,621.3 259.5,623.4 260.5,625.2 261.5,626.8 262.5,628.0 263.5,629.0 264.5,627.8 265.5,625.4 266.5,626.2 267.5,623.8 268.5,619.4 269.5,614.5 270.5,612.9 271.5,607.4 272.5,605.2 273.5,601.8 274.5,598.2 275.5,591.6 276.5,586.7 277.5,580.6 278.5,576.3 279.5,570.9 280.5,565.5 281.5,560.0 282.5,552.7 283.5,550.0 284.5,542.8 285.5,539.4 286.5,533.3 287.5,529.3 288.5,523.6 289.5,517.3 290.5,515.7 291.5,512.6 292.5,506.2 293.5,503.7 294.5,502.4 295.5,497.1 296.5,495.6 297.5,495.5 298.5,492.2 299.5,491.9 300.5,493.8 301.5,493.2 302.5,495.7 303.5,496.6 304.5,500.5 305.5,501.1 306.5,504.6 307.5,506.6 308.5,509.7 309.5,514.8 310.5,515.7 311.5,520.3 312.5,525.2 313.5,529.3 314.5,532.6 315.5,535.2 316.5,539.7 317.5,544.2 318.5,550.6 319.5,557.1 320.5,560.0 321.5,565.6 322.5,571.2 323.5,574.9 324.5,578.5 325.5,583.0 326.5,588.3 327.5,591.6 328.5,596.6 329.5,599.7 330.5,601.6 331.5,607.0 332.5,611.2 333.5,612.5 334.5,616.3 335.5,619.8 336.5,619.5 337.5,623.4 338.5,625.2 339.5,626.8 340.5,628.0 341.5,628.1 342.5,627.8 343.5,628.1 344.5,622.6 345.5,622.9 346.5,619.4 347.5,615.4 348.5,612.0 349.5,609.2 350.5,607.0 351.5,600.0 352.5,596.4 353.5,591.6 354.5,586.7 355.5,581.5 356.5,576.3 357.5,570.0 358.5,565.5 359.5,560.0 360.5,554.5 361.5,550.0 362.5,544.6 363.5,536.7 364.5,531.5 365.5,526.6 366.5,521.8 367.5,519.1 368.5,514.8 369.5,510.8 370.5,505.3 371.5,503.7 372.5,501.5 373.5,498.0 374.5,495.6 375.5,492.8 376.5,494.0 377.5,491.9 378.5,492.3 379.5,496.0 380.5,495.6 381.5,501.1 382.5,500.7 383.5,506.2 384.5,512.1 385.5,513.0 386.5,517.8 387.5,524.8 388.5,529.3 389.5,536.8 390.5,540.8 391.5,545.9 392.5,553.8 393.5,558.2 394.5,567.1 395.5,572.3 396.5,577.4 397.5,584.1 398.5,589.8 399.5,596.1 400.5,599.5 401.5,605.2 402.5,610.6 403.5,613.8 404.5,617.5 405.5,620.7 406.5,623.5 407.5,627.6 408.5,625.9 409.5,629.0 410.5,627.8 411.5,625.3 412.5,622.4 413.5,620.0 414.5,620.7 415.5,615.8 416.5,614.0 417.5,606.5 418.5,604.1 419.5,599.7 420.5,595.8 421.5,589.0 422.5,585.7 423.5,578.5 424.5,572.2 425.5,570.2 426.5,561.0 427.5,557.2 428.5,553.4 429.5,546.9 430.5,540.6 431.5,534.3 432.5,530.1 433.5,526.0 434.5,521.2 435.5,517.7 436.5,511.7 437.5,508.7 438.5,503.3 439.5,502.0 440.5,498.2 441.5,495.8 442.5,493.8 443.5,491.3 444.5,491.9 445.5,493.3 446.5,494.4 447.5,497.9 448.5,498.3 449.5,502.8 450.5,506.0 451.5,510.5 452.5,518.2 453.5,520.9 454.5,528.4 455.5,532.6 456.5,541.5 457.5,547.8 458.5,553.4 459.5,560.0 460.5,566.6 461.5,573.1 462.5,580.3 463.5,585.6 464.5,591.6 465.5,595.5 466.5,603.6 467.5,606.8 468.5,611.3 469.5,618.1 470.5,619.9 471.5,623.0 472.5,627.4 473.5,627.6 474.5,629.0 475.5,629.5 476.5,625.8 477.5,621.7 478.5,622.5 479.5,616.6 480.5,613.8 481.5,609.7 482.5,603.4 483.5,599.5 484.5,596.1 485.5,591.6 486.5,582.3 487.5,578.3 488.5,572.3 489.5,564.4 490.5,560.0 491.5,552.9 492.5,549.5 493.5,543.5 494.5,534.1 495.5,530.2 496.5,524.8 497.5,519.6 498.5,515.7 499.5,510.3 500.5,504.4 501.5,500.7 502.5,499.3 503.5,498.3 504.5,492.4 505.5,494.1 506.5,491.0 507.5,492.3 508.5,492.4 509.5,496.5 510.5,498.4 511.5,500.7 512.5,506.2 513.5,510.3 514.5,514.8 515.5,518.7 516.5,524.8 517.5,528.4 518.5,536.8 519.5,541.7 520.5,547.7 521.5,552.9 522.5,560.9 523.5,566.2 524.5,571.4 525.5,578.3 526.5,583.2 527.5,588.9 528.5,595.2 529.5,600.4 530.5,605.2 531.5,609.7 532.5,613.8 533.5,617.5 534.5,621.6 535.5,623.5 536.5,627.6 537.5,627.7 538.5,630.8 539.5,627.7 540.5,626.7 541.5,623.5 542.5,618.9 543.5,615.7 544.5,613.8 545.5,609.7 546.5,603.4 547.5,599.5 548.5,595.2 549.5,591.6 550.5,582.3 551.5,578.3 552.5,570.5 553.5,567.1 554.5,559.1 555.5,552.9 556.5,546.8 557.5,543.5 558.5,535.9 559.5,530.2 560.5,523.9 561.5,521.4 562.5,513.0 563.5,511.2 564.5,508.0 565.5,500.7 566.5,499.3 567.5,496.5 568.5,495.1 569.5,492.3 570.5,490.1 571.5,492.2 572.5,493.9 573.5,496.0 574.5,496.8 575.5,501.5 576.5,505.7 577.5,508.6 578.5,512.6 579.5,516.1 580.5,523.5 581.5,526.7 582.5,531.9 583.5,535.4 584.5,541.9 585.5,548.5 586.5,554.2 587.5,561.8 588.5,564.0 589.5,570.6 590.5,579.0 591.5,582.8 592.5,589.9 593.5,593.3 594.5,600.1 595.5,603.0 596.5,607.4 597.5,611.4 598.5,615.2 599.5,617.6 600.5,623.2 601.5,624.9 602.5,627.0 603.5,626.9 604.5,629.0 605.5,627.8 606.5,626.1 607.5,624.9 608.5,621.4 609.5,617.6 610.5,617.0 611.5,611.4 612.5,607.4 613.5,603.0 614.5,598.3 615.5,592.4 616.5,588.1 617.5,582.8 618.5,577.2 619.5,570.6 620.5,565.8 621.5,559.1 622.5,554.2 623.5,549.4 624.5,541.9 625.5,537.2 626.5,531.0 627.5,526.7 628.5,521.7 629.5,517.0 630.5,511.7 631.5,506.8 632.5,505.7 633.5,501.5 634.5,498.6 635.5,496.0 636.5,492.1 637.5,492.2 638.5,492.8 639.5,492.2 640.5,494.8 641.5,496.0 642.5,498.6 643.5,503.3 644.5,504.8 645.5,506.8 646.5,514.4 647.5,515.2 648.5,521.7 649.5,527.6 650.5,530.1 651.5,537.2 652.5,542.8 653.5,548.5 654.5,556.0 655.5,558.2 656.5,564.9 657.5,571.5 658.5,576.3 659.5,584.6 660.5,587.2 661.5,594.2 662.5,597.4 663.5,602.1 664.5,609.2 665.5,612.3 666.5,615.2 667.5,618.5 668.5,621.4 669.5,624.0 670.5,626.1 671.5,626.9 672.5,629.0 673.5,628.8 674.5,626.6 675.5,624.8 676.5,622.8 677.5,620.4 678.5,616.0 679.5,614.8 680.5,611.5 681.5,607.1 682.5,603.4 683.5,602.0 684.5,596.0 685.5,591.6 686.5,588.0 687.5,582.3 688.5,576.6 689.5,571.7 690.5,569.4 691.5,561.6 692.5,559.3 693.5,554.2 694.5,548.3 695.5,540.7 696.5,536.8 697.5,532.9 698.5,527.5 699.5,524.0 700.5,519.8 701.5,515.7 702.5,513.8 703.5,508.5 704.5,507.0 705.5,500.4 706.5,500.5 707.5,499.0 708.5,494.3 709.5,493.4 710.5,493.0 711.5,489.2 712.5,493.0 713.5,495.3 714.5,496.2 715.5,497.4 716.5,501.7 717.5,504.5 718.5,506.7 719.5,509.2 720.5,512.8 721.5,516.8 722.5,521.0 723.5,525.3 724.5,531.7 725.5,534.7 726.5,539.6 727.5,544.6 728.5,551.5 729.5,556.6 730.5,558.2 731.5,565.2 732.5,572.1 733.5,575.4 734.5,580.4 735.5,587.1 736.5,589.2 737.5,596.5 738.5,599.9 739.5,605.0 740.5,605.4 741.5,609.9 742.5,614.2 743.5,617.3 744.5,621.9 745.5,622.6 746.5,624.7 747.5,625.6 748.5,627.9 749.5,629.0 750.5,628.0 751.5,626.6 752.5,623.2 753.5,624.8 754.5,620.7 755.5,618.2 756.5,617.1 757.5,612.2 758.5,608.8 759.5,606.1 760.5,601.4 761.5,596.4 762.5,593.1 763.5,589.6 764.5,582.3 765.5,581.2 766.5,576.5 767.5,571.6 768.5,563.1 769.5,559.1 770.5,556.0 771.5,551.1 772.5,543.5 773.5,539.7 774.5,537.7 775.5,531.3 776.5,525.1 777.5,522.7 778.5,519.5 779.5,516.6 780.5,511.2 781.5,506.9 782.5,504.7 783.5,500.0 784.5,499.3 785.5,497.9 786.5,494.1 787.5,492.5 788.5,492.0 789.5,490.1 790.5,491.9 791.5,493.0 792.5,494.4 793.5,496.1 794.5,498.0 795.5,500.1 796.5,501.5 797.5,505.0 798.5,507.8 799.5,510.8 800.5,515.8 801.5,517.3 802.5,520.9 803.5,524.5 804.5,528.4 805.5,534.1 806.5,538.2 807.5,542.4 808.5,544.8 809.5,550.9 810.5,553.4 811.5,559.6 812.5,562.2 813.5,566.6 814.5,569.1 815.5,574.3 816.5,577.6 817.5,583.6 818.5,587.7 819.5,589.8 820.5,593.7 821.5,598.2 822.5,604.5 823.5,606.0 824.5,607.4 825.5,610.4 826.5,616.8 827.5,618.5 828.5,619.9 829.5,622.0 830.5,623.9 831.5,625.6 832.5,627.0 833.5,628.1 834.5,629.0 835.5,626.2 836.5,625.0 837.5,623.4 838.5,625.2 839.5,621.3 840.5,617.1 841.5,614.5 842.5,615.2 843.5,612.1 844.5,607.0 845.5,604.3 846.5,599.7 847.5,595.7 848.5,591.6 849.5,585.6 850.5,581.2 851.5,580.3 852.5,574.0 853.5,569.4 854.5,564.7 855.5,560.0 856.5,556.2 857.5,550.6 858.5,546.0 859.5,541.5 860.5,537.0 861.5,532.6 862.5,528.4 863.5,526.1 864.5,518.5 865.5,516.6 866.5,513.0 867.5,507.9 868.5,505.7 869.5,502.8 870.5,502.0 871.5,496.9 872.5,496.6 873.5,493.9 874.5,495.0 875.5,492.0 876.5,489.2 877.5,492.7 878.5,492.9 879.5,495.1 880.5,494.7 881.5,495.5 882.5,499.3 883.5,501.4 884.5,504.6 885.5,508.0 886.5,508.9 887.5,510.8 888.5,513.9 889.5,518.0 890.5,523.1 891.5,523.0 892.5,526.6 893.5,532.1 894.5,535.0 895.5,538.0 896.5,543.7 897.5,547.7 898.5,552.7 899.5,555.9 900.5,559.1 901.5,564.1 902.5,568.2 903.5,570.5 904.5,574.5 905.5,580.2 906.5,584.1 907.5,587.9 908.5,592.5 909.5,595.2 910.5,599.6 911.5,603.8 912.5,603.4 913.5,606.5 914.5,611.1 915.5,614.7 916.5,615.4 917.5,618.6 918.5,618.9 919.5,621.8 920.5,624.4 921.5,624.9 922.5,627.1 923.5,628.2 924.5,627.2 925.5,628.2 926.5,628.9 927.5,625.8 928.5,625.1 929.5,622.5 930.5,620.5 931.5,620.1 932.5,614.1 933.5,613.3 934.5,611.4 935.5,605.8 936.5,606.2 937.5,600.2 938.5,595.9 939.5,594.1 940.5,592.2 941.5,586.6 942.5,582.6 943.5,578.6 944.5,575.5 945.5,571.3 946.5,568.1 947.5,562.1 948.5,558.8 949.5,555.5 950.5,549.6 951.5,545.4 952.5,541.4 953.5,537.4 954.5,533.4 955.5,530.5 956.5,525.0 957.5,521.4 958.5,518.9 959.5,516.5 960.5,514.2 961.5,509.5 962.5,507.6 963.5,504.1 964.5,500.8 965.5,498.6 966.5,495.7 967.5,497.6 968.5,492.4 969.5,492.0 970.5,493.6 971.5,491.0 972.5,491.8 973.5,492.0 974.5,494.2 975.5,494.9 976.5,497.5 977.5,497.7 978.5,499.9 979.5,505.0 980.5,508.5" fill="none" stroke="#00ffff" stroke-width="1.2"/><path d="M11 295 L26 295 L31.5 300.5 L26 306 L11 306Z" fill="#ffff00" stroke="#2a2a40" stroke-width=".6"/><path d="M18.5 298.5 L20.5 297.5 L20.5 303.5" stroke="#5a1a00" stroke-width="1.1" fill="none"/><path d="M1005 295 L987 295 L981.5 300.5 L987 306 L1005 306Z" fill="#ffff00" stroke="#2a2a40" stroke-width=".6"/><path d="M991.5 297.5 L998.5 297.5 M995 297.5 L995 304.5" stroke="#1a5a10" stroke-width="1.3" fill="none"/><path d="M11 552 L26 552 L31.5 558 L26 564 L11 564Z" fill="#00ffff" stroke="#3a2020" stroke-width=".6"/><path d="M17.5 555.5 L21.5 555.5 L18.5 560.5" stroke="#0a3a20" stroke-width="1.1" fill="none"/><rect x="32" y="709" width="106" height="19" fill="#000"/><rect x="33" y="710" width="32" height="14" fill="#ffff00"/><text x="34" y="723" font-size="12.5" letter-spacing="1" fill="#000" font-family="Liberation Sans">CH1</text><path d="M67.5 719 Q69.5 714 72 718 Q74.5 722 76.5 717" fill="none" stroke="#f0f000" stroke-width="1.2"/><text x="87.5" y="723" font-size="12.5" letter-spacing=".5" fill="#f0f000" font-family="Liberation Sans">1.00V</text><rect x="157" y="709" width="104" height="19" fill="#000"/><text x="158.5" y="723" font-size="12.5" letter-spacing=".8" fill="#00d8e8" font-family="Liberation Sans">CH2</text><path d="M192.5 719 Q194.5 714 197 718 Q199.5 722 201.5 717" fill="none" stroke="#00d8e8" stroke-width="1.2"/><text x="212.5" y="723" font-size="12.5" letter-spacing=".5" fill="#00d8e8" font-family="Liberation Sans">1.00V</text><rect x="877" y="709" width="102" height="19" fill="#000"/><text x="880.5" y="723" font-size="12.5" letter-spacing=".75" fill="#ff8c00" font-family="Liberation Sans">Time: 500.0us</text></svg><div class="a" style="left:1009px;top:92px;width:219px;height:641px;background:#f0f0f0"></div><div class="t" style="left:1019px;top:102.5px;font-size:10.6px;color:#000">Connect:</div><div class="a" style="left:1066px;top:97px;width:21px;height:21px;border-radius:50%;background:#ff8000;border:1px solid #b05a00"></div><div class="a" style="left:1009px;top:140px;width:220px;height:594px;border:1px solid #898c95;border-right:none;border-bottom:none;background:#f0f0f0"></div><div class="a" style="left:1054px;top:122px;width:40px;height:19px;border:1px solid #898c95;border-bottom:none;background:linear-gradient(#f2f2f2,#ebebeb 50%,#dddddd 51%,#cfcfcf)"></div><div class="a" style="left:1094px;top:122px;width:40px;height:19px;border:1px solid #898c95;border-bottom:none;background:linear-gradient(#f2f2f2,#ebebeb 50%,#dddddd 51%,#cfcfcf)"></div><div class="a" style="left:1009px;top:120px;width:46px;height:22px;border:1px solid #898c95;border-bottom:none;background:#ffffff"></div><div class="t" style="left:1016px;top:125px;font-size:10.6px;color:#000">DSO</div><div class="t" style="left:1058px;top:126px;font-size:11px;color:#000">DDS</div><div class="t" style="left:1100px;top:126px;font-size:11px;color:#000">DMM</div><div class="a" style="left:1215px;top:141px;width:13px;height:592px;background:linear-gradient(90deg,#e6e6e6,#f4f4f4 40%,#f4f4f4 60%,#e9e9e9)"></div><svg class="a" style="left:1215px;top:144px" width="13" height="10"><path d="M2.5 7.5 L6.5 3.5 L10.5 7.5Z" fill="#404040"/></svg><div class="a" style="left:1215px;top:159px;width:13px;height:412px;border:1px solid #9a9a9a;border-right:none;border-radius:2px 0 0 2px;background:linear-gradient(90deg,#f4f4f4,#ececec 45%,#d4d4d8 70%,#cfcfd4)"></div><div class="a" style="left:1219px;top:362px;width:7px;height:1px;background:#555;box-shadow:0 3px 0 #555,0 6px 0 #555,0 1px 0 #fff,0 4px 0 #fff,0 7px 0 #fff"></div><div class="gb" style="left:1015px;top:153px;width:193px;height:110px"></div><div class="gbl" style="left:1021px;top:148px">Horizontal</div><div class="t" style="left:1017px;top:168.5px;font-size:10.5px;color:#000">Time / DIV</div><div class="combo" style="left:1017px;top:185px;width:68px;height:22px"><span>500.0us</span><i></i></div><div class="t" style="left:1017px;top:215px;font-size:11px;color:#000">Format</div><div class="combo" style="left:1017px;top:234px;width:68px;height:22px"><span>Y - T</span><i></i></div><svg class="a" style="left:1089px;top:162px" width="90" height="90" viewBox="1089 162 90 90">
<defs><linearGradient id="kr1134207" x1="0" y1="0" x2="1" y2="1"><stop offset="0" stop-color="#dedede"/><stop offset=".5" stop-color="#a4a4a4"/><stop offset="1" stop-color="#7a7a7a"/></linearGradient></defs>
<path d="M1107.1 233.9 A38 38 0 1 1 1160.9 233.9" fill="none" stroke="#2a2a2a" stroke-width="1.1"/>
<path d="M1108 233 A36.8 36.8 0 1 1 1160 233" fill="none" stroke="#ffffff" stroke-width="1.1"/>
<path d="M1102 238.5 L1108.5 232.8 M1166 238.5 L1159.5 232.8" stroke="#111" stroke-width="1.3"/>
<circle cx="1134" cy="207" r="35.4" fill="url(#kr1134207)" stroke="#707070" stroke-width=".6"/>
<circle cx="1134" cy="207" r="29.2" fill="#000090"/>
<circle cx="1134" cy="207" r="27" fill="#0000cc"/>
<path d="M1136.5 201 L1142.5 186" stroke="#d8c860" stroke-width="2"/>
</svg><div class="gb" style="left:1015px;top:277px;width:193px;height:150px"></div><div class="gbl" style="left:1021px;top:272px">Vertical</div><div class="combo" style="left:1020px;top:286px;width:68px;height:21px"><span>CH1</span><i></i></div><div class="a" style="left:1090px;top:295px;width:13px;height:13px;border:1px solid #8f8f8f;background:linear-gradient(135deg,#dcdcdc,#fbfbfb)"></div><svg class="a" style="left:1091px;top:296px" width="11" height="11"><path d="M2.5 5.5 L4.5 9 L9 1.5" fill="none" stroke="#3a5aa8" stroke-width="1.6"/></svg><div class="t" style="left:1106px;top:297px;font-size:11px;letter-spacing:-.6px;color:#000">ON/OFF</div><div class="a" style="left:1020px;top:313px;width:68px;height:21px;border:1px solid #c9d4dc;background:#fff"></div><div class="t" style="left:1025px;top:318px;font-size:11px;color:#000">1.00V</div><div class="a" style="left:1071px;top:314px;width:16px;height:19px;background:#f0f0f0;border-left:1px solid #d8d8d8"></div><div class="a" style="left:1072px;top:315px;width:14px;height:8px;border:1px solid #c8cdd4;background:linear-gradient(#f8f8f8,#e4e4e4)"></div><div class="a" style="left:1072px;top:324px;width:14px;height:8px;border:1px solid #c8cdd4;background:linear-gradient(#f8f8f8,#e4e4e4)"></div><svg class="a" style="left:1072px;top:315px" width="14" height="18"><path d="M4.5 5.5 L7 3 L9.5 5.5Z M4.5 12 L7 14.5 L9.5 12Z" fill="#4a6ab0"/></svg><div class="combo" style="left:1020px;top:343px;width:68px;height:21px"><span>GND</span><i></i></div><div class="combo" style="left:1020px;top:370px;width:68px;height:21px"><span>x1</span><i></i></div><svg class="a" style="left:1089px;top:310px" width="90" height="90" viewBox="1089 310 90 90">
<defs><linearGradient id="kr1134355" x1="0" y1="0" x2="1" y2="1"><stop offset="0" stop-color="#dedede"/><stop offset=".5" stop-color="#a4a4a4"/><stop offset="1" stop-color="#7a7a7a"/></linearGradient></defs>
<path d="M1107.1 381.9 A38 38 0 1 1 1160.9 381.9" fill="none" stroke="#2a2a2a" stroke-width="1.1"/>
<path d="M1108 381 A36.8 36.8 0 1 1 1160 381" fill="none" stroke="#ffffff" stroke-width="1.1"/>
<path d="M1102 386.5 L1108.5 380.8 M1166 386.5 L1159.5 380.8" stroke="#111" stroke-width="1.3"/>
<circle cx="1134" cy="355" r="35.4" fill="url(#kr1134355)" stroke="#707070" stroke-width=".6"/>
<circle cx="1134" cy="355" r="29.2" fill="#9a9400"/>
<circle cx="1134" cy="355" r="27" fill="#ffff00"/>
<path d="M1130.5 348.5 L1123.5 334" stroke="#3030b0" stroke-width="2"/>
</svg><div class="gb" style="left:1015px;top:440px;width:193px;height:278px"></div><div class="gbl" style="left:1021px;top:435px">Trigger</div><div class="t" style="left:1026px;top:458px;font-size:11px;color:#000">Trigger Mode</div><div class="t" style="left:1026px;top:486px;font-size:11px;color:#000">Trigger Sweep</div><div class="t" style="left:1026px;top:514px;font-size:11px;color:#000">Trigger Source</div><div class="t" style="left:1026px;top:542px;font-size:11px;color:#000">Trigger Slope</div><div class="combo" style="left:1107px;top:451px;width:68px;height:22px"><span>Edge</span><i></i></div><div class="combo" style="left:1107px;top:480px;width:68px;height:21px"><span>AUTO</span><i></i></div><div class="combo" style="left:1107px;top:510px;width:68px;height:22px"><span>CH1</span><i></i></div><div class="combo" style="left:1107px;top:540px;width:68px;height:22px"><span>+</span><i></i></div><div class="a" style="left:8px;top:733px;width:1220px;height:1px;background:#a0a0a0"></div><div class="a" style="left:8px;top:734px;width:1220px;height:17px;background:#f0eeee"></div><div class="a" style="left:8px;top:751px;width:1220px;height:1px;background:#ffffff"></div><div class="a" style="left:987px;top:735px;width:1px;height:16px;background:#c8c8c8"></div><div class="t" style="left:10px;top:737.5px;font-size:12.6px;color:#000">Connected</div><div class="t" style="left:991.5px;top:737.5px;font-size:12.2px;color:#000">400.00KSa</div><div class="t" style="left:1099.5px;top:737.5px;font-size:12.6px;color:#000">26-09-2018</div><div class="t" style="left:1173.5px;top:737.5px;font-size:12.4px;color:#000">09:58</div><svg class="a" style="left:1214px;top:739px" width="12" height="12"><g fill="#b8b8b8"><rect x="9" y="1" width="2" height="2"/><rect x="6" y="4" width="2" height="2"/><rect x="9" y="4" width="2" height="2"/><rect x="3" y="7" width="2" height="2"/><rect x="6" y="7" width="2" height="2"/><rect x="9" y="7" width="2" height="2"/></g></svg></body></html>
